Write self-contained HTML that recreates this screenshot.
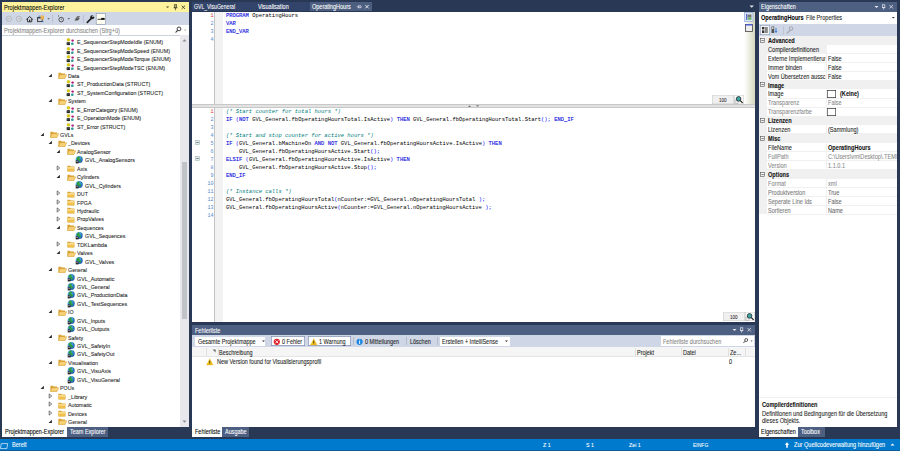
<!DOCTYPE html>
<html><head><meta charset="utf-8"><style>
html,body{margin:0;padding:0;width:900px;height:451px;overflow:hidden;background:#293955;}
body div{position:absolute;}
body div{-webkit-text-stroke:0.08px currentColor;}
body{font-family:'Liberation Sans', sans-serif;position:relative;}
</style></head><body>
<div style="left:2px;top:2px;width:187px;height:10px;background:#FFF29D;"></div>
<div style="left:4px;top:2.70px;line-height:10px;font-size:6.440px;color:#000;font-weight:400;font-family:'Liberation Sans', sans-serif;white-space:nowrap;transform:scaleX(0.8696);transform-origin:0 50%;">Projektmappen-Explorer</div>
<svg style="position:absolute;left:163px;top:4px" width="30" height="7" viewBox="0 0 30 7"><path d="M3 2.5h3.2l-1.6 1.6z" fill="#4a4a30"/><rect x="11.3" y="0.7" width="2.4" height="3" fill="#b8ae6a" stroke="#4a4a30" stroke-width="0.7"/><path d="M10.6 3.8h3.8M12.5 3.8v2.4" stroke="#4a4a30" stroke-width="0.8"/><path d="M18.7 1.6l3.3 3.3M22 1.6l-3.3 3.3" stroke="#4a4a30" stroke-width="0.95"/></svg>
<div style="left:2px;top:12px;width:187px;height:13.3px;background:#CFD6E5;"></div>
<svg style="position:absolute;left:0px;top:12px" width="110" height="13" viewBox="0 0 110 13">
<circle cx="8.8" cy="6.8" r="2.7" fill="#d8dce4" stroke="#aeb2ba" stroke-width="0.9"/><path d="M10 6.8h-2.4M8.7 5.6l-1.2 1.2l1.2 1.2" stroke="#aeb2ba" stroke-width="0.7" fill="none"/>
<circle cx="18.9" cy="6.8" r="2.7" fill="#d8dce4" stroke="#aeb2ba" stroke-width="0.9"/><path d="M17.7 6.8h2.4M19 5.6l1.2 1.2l-1.2 1.2" stroke="#aeb2ba" stroke-width="0.7" fill="none"/>
<path d="M26.3 7.6l3.3-3.1l3.3 3.1" fill="none" stroke="#2a2a2a" stroke-width="1"/><path d="M27.5 7v2.8h4.2v-2.8" fill="none" stroke="#2a2a2a" stroke-width="0.9"/><rect x="29" y="7.6" width="1.3" height="2.2" fill="#2a2a2a"/>
<rect x="37.6" y="5.6" width="4.6" height="4" fill="none" stroke="#333" stroke-width="0.9"/><rect x="37.6" y="5.4" width="4.6" height="1" fill="#333"/><rect x="40.6" y="3.5" width="3.4" height="4" fill="#e8b456"/><path d="M38.3 4.2h2" stroke="#3b78d0" stroke-width="0.8"/><path d="M42 9.6h1.6" stroke="#3b78d0" stroke-width="0.8"/>
<path d="M47.4 6.3h2.4l-1.2 1.2z" fill="#444"/>
<rect x="52.3" y="3" width="0.6" height="7.8" fill="#a9b2c4"/>
<circle cx="61.2" cy="7.6" r="2.3" fill="none" stroke="#444" stroke-width="0.9"/><path d="M61.2 6.5v1.2h0.9" stroke="#444" stroke-width="0.5" fill="none"/><rect x="58" y="3.5" width="1" height="1" fill="#555"/>
<path d="M67.6 6.3h2.4l-1.2 1.2z" fill="#444"/>
<path d="M74.3 8.5l2-2.6h3.6l-2 2.6z" fill="#555"/><path d="M75.3 6.5l2-2.4h3l-2 2.4" fill="#777"/>
<rect x="83.3" y="3" width="0.6" height="7.8" fill="#a9b2c4"/>
<path d="M87.3 10.4l4-4" stroke="#1e1e1e" stroke-width="1.6" stroke-linecap="round"/><circle cx="92.2" cy="5.2" r="2" fill="#1e1e1e"/><path d="M92.4 4.9l2-2" stroke="#cfd6e5" stroke-width="1.2"/>
<rect x="96.2" y="1.5" width="9.4" height="10.8" fill="#fffcf0" stroke="#7f8fb0" stroke-width="0.6"/>
<path d="M97.6 7.3h7" stroke="#111" stroke-width="0.8"/><rect x="101.2" y="5.9" width="3.4" height="1.8" fill="#111"/>
</svg>
<div style="left:2px;top:25.3px;width:187px;height:9.7px;background:#FFFFFF;"></div>
<div style="left:4px;top:25.70px;line-height:10px;font-size:6.440px;color:#858585;font-weight:400;font-family:'Liberation Sans', sans-serif;white-space:nowrap;transform:scaleX(0.8696);transform-origin:0 50%;">Projektmappen-Explorer durchsuchen (Strg+ü)</div>
<svg style="position:absolute;left:174px;top:26px" width="14" height="8" viewBox="0 0 14 8"><circle cx="5" cy="2.9" r="1.9" fill="none" stroke="#2a2a2a" stroke-width="0.9"/><path d="M3.6 4.3l-2 2.2" stroke="#2a2a2a" stroke-width="1.1"/><path d="M10.2 3.8h2l-1 1z" fill="#666"/></svg>
<div style="left:2px;top:35px;width:178px;height:392px;background:#FFFFFF;"></div>
<div style="left:2px;top:35px;width:187px;height:0.8px;background:#CAD2E0;"></div>
<div style="left:180px;top:35px;width:9px;height:392px;background:#E8E8EC;"></div>
<div style="left:182px;top:162px;width:5px;height:157px;background:#C2C3C9;"></div>
<svg style="position:absolute;left:180px;top:36px" width="9" height="8" viewBox="0 0 9 8"><path d="M2.5 5.5l2-2.2l2 2.2z" fill="#868999"/></svg>
<svg style="position:absolute;left:180px;top:418px" width="9" height="8" viewBox="0 0 9 8"><path d="M2.5 2.5l2 2.2l2-2.2z" fill="#868999"/></svg>
<div style="left:2px;top:35px;width:178px;height:392px;overflow:hidden">
<svg style="position:absolute;left:64.0px;top:3.1px" width="9" height="9" viewBox="0 0 9 9"><circle cx="2.45" cy="1.8" r="1.5" fill="#e0d000" stroke="#a09400" stroke-width="0.3"/><path d="M0.7 4.2h3.3v2.9h-3.3z" fill="#1e1e1e"/><path d="M1.2 6.8v-2l1.15 1.2l1.15-1.2v2" stroke="#707070" stroke-width="0.4" fill="none"/><ellipse cx="6.6" cy="2.6" rx="1.35" ry="1.1" fill="#b8157c"/><path d="M6.8 3.6v1" stroke="#6a8a8a" stroke-width="0.4"/><ellipse cx="6.3" cy="5.8" rx="1.4" ry="1.3" fill="#2f9a9a"/></svg>
<div style="left:74.5px;top:2.20px;line-height:10px;font-size:6.152px;color:#1e1e1e;font-weight:400;font-family:'Liberation Sans', sans-serif;white-space:nowrap;transform:scaleX(0.8696);transform-origin:0 50%;">E_SequencerStepModeIdle (ENUM)</div>
<svg style="position:absolute;left:64.0px;top:11.539999999999997px" width="9" height="9" viewBox="0 0 9 9"><circle cx="2.45" cy="1.8" r="1.5" fill="#e0d000" stroke="#a09400" stroke-width="0.3"/><path d="M0.7 4.2h3.3v2.9h-3.3z" fill="#1e1e1e"/><path d="M1.2 6.8v-2l1.15 1.2l1.15-1.2v2" stroke="#707070" stroke-width="0.4" fill="none"/><ellipse cx="6.6" cy="2.6" rx="1.35" ry="1.1" fill="#b8157c"/><path d="M6.8 3.6v1" stroke="#6a8a8a" stroke-width="0.4"/><ellipse cx="6.3" cy="5.8" rx="1.4" ry="1.3" fill="#2f9a9a"/></svg>
<div style="left:74.5px;top:10.64px;line-height:10px;font-size:6.152px;color:#1e1e1e;font-weight:400;font-family:'Liberation Sans', sans-serif;white-space:nowrap;transform:scaleX(0.8696);transform-origin:0 50%;">E_SequencerStepModeSpeed (ENUM)</div>
<svg style="position:absolute;left:64.0px;top:19.979999999999997px" width="9" height="9" viewBox="0 0 9 9"><circle cx="2.45" cy="1.8" r="1.5" fill="#e0d000" stroke="#a09400" stroke-width="0.3"/><path d="M0.7 4.2h3.3v2.9h-3.3z" fill="#1e1e1e"/><path d="M1.2 6.8v-2l1.15 1.2l1.15-1.2v2" stroke="#707070" stroke-width="0.4" fill="none"/><ellipse cx="6.6" cy="2.6" rx="1.35" ry="1.1" fill="#b8157c"/><path d="M6.8 3.6v1" stroke="#6a8a8a" stroke-width="0.4"/><ellipse cx="6.3" cy="5.8" rx="1.4" ry="1.3" fill="#2f9a9a"/></svg>
<div style="left:74.5px;top:19.08px;line-height:10px;font-size:6.152px;color:#1e1e1e;font-weight:400;font-family:'Liberation Sans', sans-serif;white-space:nowrap;transform:scaleX(0.8696);transform-origin:0 50%;">E_SequencerStepModeTorque (ENUM)</div>
<svg style="position:absolute;left:64.0px;top:28.419999999999995px" width="9" height="9" viewBox="0 0 9 9"><circle cx="2.45" cy="1.8" r="1.5" fill="#e0d000" stroke="#a09400" stroke-width="0.3"/><path d="M0.7 4.2h3.3v2.9h-3.3z" fill="#1e1e1e"/><path d="M1.2 6.8v-2l1.15 1.2l1.15-1.2v2" stroke="#707070" stroke-width="0.4" fill="none"/><ellipse cx="6.6" cy="2.6" rx="1.35" ry="1.1" fill="#b8157c"/><path d="M6.8 3.6v1" stroke="#6a8a8a" stroke-width="0.4"/><ellipse cx="6.3" cy="5.8" rx="1.4" ry="1.3" fill="#2f9a9a"/></svg>
<div style="left:74.5px;top:27.52px;line-height:10px;font-size:6.152px;color:#1e1e1e;font-weight:400;font-family:'Liberation Sans', sans-serif;white-space:nowrap;transform:scaleX(0.8696);transform-origin:0 50%;">E_SequencerStepModeTSC (ENUM)</div>
<svg style="position:absolute;left:46.0px;top:37.75999999999999px" width="5" height="5" viewBox="0 0 5 5"><path d="M0.6 4.1h3.3v-3.3z" fill="#262626"/></svg>
<svg style="position:absolute;left:56.2px;top:37.35999999999999px" width="9" height="7" viewBox="0 0 9 7"><path d="M0.4 0.7h2.6l0.7 0.8h3.3v4.9h-6.6z" fill="#d9a234"/><path d="M0.4 6.4l1.5-3.7h6.8l-1.6 3.7z" fill="#f6d27a" stroke="#d39a2c" stroke-width="0.45"/></svg>
<div style="left:66.2px;top:35.96px;line-height:10px;font-size:6.152px;color:#1e1e1e;font-weight:400;font-family:'Liberation Sans', sans-serif;white-space:nowrap;transform:scaleX(0.8696);transform-origin:0 50%;">Data</div>
<svg style="position:absolute;left:64.0px;top:45.29999999999999px" width="9" height="9" viewBox="0 0 9 9"><circle cx="2.45" cy="1.8" r="1.5" fill="#e0d000" stroke="#a09400" stroke-width="0.3"/><path d="M0.7 4.2h3.3v2.9h-3.3z" fill="#1e1e1e"/><path d="M1.2 6.8v-2l1.15 1.2l1.15-1.2v2" stroke="#707070" stroke-width="0.4" fill="none"/><ellipse cx="6.6" cy="2.6" rx="1.35" ry="1.1" fill="#b8157c"/><path d="M6.8 3.6v1" stroke="#6a8a8a" stroke-width="0.4"/><ellipse cx="6.3" cy="5.8" rx="1.4" ry="1.3" fill="#2f9a9a"/></svg>
<div style="left:74.5px;top:44.40px;line-height:10px;font-size:6.152px;color:#1e1e1e;font-weight:400;font-family:'Liberation Sans', sans-serif;white-space:nowrap;transform:scaleX(0.8696);transform-origin:0 50%;">ST_ProductionData (STRUCT)</div>
<svg style="position:absolute;left:64.0px;top:53.74px" width="9" height="9" viewBox="0 0 9 9"><circle cx="2.45" cy="1.8" r="1.5" fill="#e0d000" stroke="#a09400" stroke-width="0.3"/><path d="M0.7 4.2h3.3v2.9h-3.3z" fill="#1e1e1e"/><path d="M1.2 6.8v-2l1.15 1.2l1.15-1.2v2" stroke="#707070" stroke-width="0.4" fill="none"/><ellipse cx="6.6" cy="2.6" rx="1.35" ry="1.1" fill="#b8157c"/><path d="M6.8 3.6v1" stroke="#6a8a8a" stroke-width="0.4"/><ellipse cx="6.3" cy="5.8" rx="1.4" ry="1.3" fill="#2f9a9a"/></svg>
<div style="left:74.5px;top:52.84px;line-height:10px;font-size:6.152px;color:#1e1e1e;font-weight:400;font-family:'Liberation Sans', sans-serif;white-space:nowrap;transform:scaleX(0.8696);transform-origin:0 50%;">ST_SystemConfiguration (STRUCT)</div>
<svg style="position:absolute;left:46.0px;top:63.08px" width="5" height="5" viewBox="0 0 5 5"><path d="M0.6 4.1h3.3v-3.3z" fill="#262626"/></svg>
<svg style="position:absolute;left:56.2px;top:62.68px" width="9" height="7" viewBox="0 0 9 7"><path d="M0.4 0.7h2.6l0.7 0.8h3.3v4.9h-6.6z" fill="#d9a234"/><path d="M0.4 6.4l1.5-3.7h6.8l-1.6 3.7z" fill="#f6d27a" stroke="#d39a2c" stroke-width="0.45"/></svg>
<div style="left:66.2px;top:61.28px;line-height:10px;font-size:6.152px;color:#1e1e1e;font-weight:400;font-family:'Liberation Sans', sans-serif;white-space:nowrap;transform:scaleX(0.8696);transform-origin:0 50%;">System</div>
<svg style="position:absolute;left:64.0px;top:70.61999999999999px" width="9" height="9" viewBox="0 0 9 9"><circle cx="2.45" cy="1.8" r="1.5" fill="#e0d000" stroke="#a09400" stroke-width="0.3"/><path d="M0.7 4.2h3.3v2.9h-3.3z" fill="#1e1e1e"/><path d="M1.2 6.8v-2l1.15 1.2l1.15-1.2v2" stroke="#707070" stroke-width="0.4" fill="none"/><ellipse cx="6.6" cy="2.6" rx="1.35" ry="1.1" fill="#b8157c"/><path d="M6.8 3.6v1" stroke="#6a8a8a" stroke-width="0.4"/><ellipse cx="6.3" cy="5.8" rx="1.4" ry="1.3" fill="#2f9a9a"/></svg>
<div style="left:74.5px;top:69.72px;line-height:10px;font-size:6.152px;color:#1e1e1e;font-weight:400;font-family:'Liberation Sans', sans-serif;white-space:nowrap;transform:scaleX(0.8696);transform-origin:0 50%;">E_ErrorCategory (ENUM)</div>
<svg style="position:absolute;left:64.0px;top:79.05999999999999px" width="9" height="9" viewBox="0 0 9 9"><circle cx="2.45" cy="1.8" r="1.5" fill="#e0d000" stroke="#a09400" stroke-width="0.3"/><path d="M0.7 4.2h3.3v2.9h-3.3z" fill="#1e1e1e"/><path d="M1.2 6.8v-2l1.15 1.2l1.15-1.2v2" stroke="#707070" stroke-width="0.4" fill="none"/><ellipse cx="6.6" cy="2.6" rx="1.35" ry="1.1" fill="#b8157c"/><path d="M6.8 3.6v1" stroke="#6a8a8a" stroke-width="0.4"/><ellipse cx="6.3" cy="5.8" rx="1.4" ry="1.3" fill="#2f9a9a"/></svg>
<div style="left:74.5px;top:78.16px;line-height:10px;font-size:6.152px;color:#1e1e1e;font-weight:400;font-family:'Liberation Sans', sans-serif;white-space:nowrap;transform:scaleX(0.8696);transform-origin:0 50%;">E_OperationMode (ENUM)</div>
<svg style="position:absolute;left:64.0px;top:87.49999999999999px" width="9" height="9" viewBox="0 0 9 9"><circle cx="2.45" cy="1.8" r="1.5" fill="#e0d000" stroke="#a09400" stroke-width="0.3"/><path d="M0.7 4.2h3.3v2.9h-3.3z" fill="#1e1e1e"/><path d="M1.2 6.8v-2l1.15 1.2l1.15-1.2v2" stroke="#707070" stroke-width="0.4" fill="none"/><ellipse cx="6.6" cy="2.6" rx="1.35" ry="1.1" fill="#b8157c"/><path d="M6.8 3.6v1" stroke="#6a8a8a" stroke-width="0.4"/><ellipse cx="6.3" cy="5.8" rx="1.4" ry="1.3" fill="#2f9a9a"/></svg>
<div style="left:74.5px;top:86.60px;line-height:10px;font-size:6.152px;color:#1e1e1e;font-weight:400;font-family:'Liberation Sans', sans-serif;white-space:nowrap;transform:scaleX(0.8696);transform-origin:0 50%;">ST_Error (STRUCT)</div>
<svg style="position:absolute;left:37.7px;top:96.83999999999997px" width="5" height="5" viewBox="0 0 5 5"><path d="M0.6 4.1h3.3v-3.3z" fill="#262626"/></svg>
<svg style="position:absolute;left:47.9px;top:96.43999999999997px" width="9" height="7" viewBox="0 0 9 7"><path d="M0.4 0.7h2.6l0.7 0.8h3.3v4.9h-6.6z" fill="#d9a234"/><path d="M0.4 6.4l1.5-3.7h6.8l-1.6 3.7z" fill="#f6d27a" stroke="#d39a2c" stroke-width="0.45"/></svg>
<div style="left:57.9px;top:95.04px;line-height:10px;font-size:6.152px;color:#1e1e1e;font-weight:400;font-family:'Liberation Sans', sans-serif;white-space:nowrap;transform:scaleX(0.8696);transform-origin:0 50%;">GVLs</div>
<svg style="position:absolute;left:46.0px;top:105.28px" width="5" height="5" viewBox="0 0 5 5"><path d="M0.6 4.1h3.3v-3.3z" fill="#262626"/></svg>
<svg style="position:absolute;left:56.2px;top:104.88px" width="9" height="7" viewBox="0 0 9 7"><path d="M0.4 0.7h2.6l0.7 0.8h3.3v4.9h-6.6z" fill="#d9a234"/><path d="M0.4 6.4l1.5-3.7h6.8l-1.6 3.7z" fill="#f6d27a" stroke="#d39a2c" stroke-width="0.45"/></svg>
<div style="left:66.2px;top:103.48px;line-height:10px;font-size:6.152px;color:#1e1e1e;font-weight:400;font-family:'Liberation Sans', sans-serif;white-space:nowrap;transform:scaleX(0.8696);transform-origin:0 50%;">_Devices</div>
<svg style="position:absolute;left:54.3px;top:113.72px" width="5" height="5" viewBox="0 0 5 5"><path d="M0.6 4.1h3.3v-3.3z" fill="#262626"/></svg>
<svg style="position:absolute;left:64.5px;top:113.32px" width="9" height="7" viewBox="0 0 9 7"><path d="M0.4 0.7h2.6l0.7 0.8h3.3v4.9h-6.6z" fill="#d9a234"/><path d="M0.4 6.4l1.5-3.7h6.8l-1.6 3.7z" fill="#f6d27a" stroke="#d39a2c" stroke-width="0.45"/></svg>
<div style="left:74.5px;top:111.92px;line-height:10px;font-size:6.152px;color:#1e1e1e;font-weight:400;font-family:'Liberation Sans', sans-serif;white-space:nowrap;transform:scaleX(0.8696);transform-origin:0 50%;">AnalogSensor</div>
<svg style="position:absolute;left:71.8px;top:120.16px" width="9" height="9" viewBox="0 0 9 9"><defs><radialGradient id="g" cx="0.35" cy="0.3" r="0.8"><stop offset="0" stop-color="#8fd4ff"/><stop offset="0.5" stop-color="#2f86d8"/><stop offset="1" stop-color="#1a4fa0"/></radialGradient></defs><circle cx="5.2" cy="4.6" r="3.5" fill="url(#g)"/><g transform="translate(0 0.3)"><path d="M3 2.2c0.8-0.9 2-1.2 2.6-0.5c0.5 0.6-0.4 1.2 0.1 1.9c0.5 0.7 1.4 0.3 1.3 1.3c-0.1 0.9-1.2 1.6-1.9 1.2c-0.6-0.4-0.2-1.3-0.9-1.6c-0.6-0.3-1.4 0.1-1.6-0.7c-0.1-0.5 0.1-1.1 0.4-1.6z" fill="#2f9d3e"/><path d="M7.2 1.5c0.6 0.4 1.1 1 1.3 1.7c-0.6 0.1-1.2-0.5-1.3-1.7z" fill="#2f9d3e"/></g><rect x="1.7" y="5.4" width="2.9" height="3" fill="#2a2a2a"/><rect x="2.3" y="6" width="1.6" height="0.7" fill="#bbb"/></svg>
<div style="left:82.8px;top:120.36px;line-height:10px;font-size:6.152px;color:#1e1e1e;font-weight:400;font-family:'Liberation Sans', sans-serif;white-space:nowrap;transform:scaleX(0.8696);transform-origin:0 50%;">GVL_AnalogSensors</div>
<svg style="position:absolute;left:54.3px;top:130.1px" width="5" height="6" viewBox="0 0 5 6"><path d="M1.2 0.9l2.5 2.1l-2.5 2.1z" fill="#fff" stroke="#4a4a4a" stroke-width="0.75" stroke-linejoin="round"/></svg>
<svg style="position:absolute;left:64.5px;top:130.2px" width="9" height="7" viewBox="0 0 9 7"><path d="M0.4 0.7h2.7l0.7 0.8h3.6v4.9h-7z" fill="#d9a234"/><rect x="0.6" y="2.2" width="6.6" height="4" fill="#f0c04a"/><rect x="0.6" y="2.2" width="6.6" height="1.4" fill="#fae19a"/></svg>
<div style="left:74.5px;top:128.80px;line-height:10px;font-size:6.152px;color:#1e1e1e;font-weight:400;font-family:'Liberation Sans', sans-serif;white-space:nowrap;transform:scaleX(0.8696);transform-origin:0 50%;">Axis</div>
<svg style="position:absolute;left:54.3px;top:139.04px" width="5" height="5" viewBox="0 0 5 5"><path d="M0.6 4.1h3.3v-3.3z" fill="#262626"/></svg>
<svg style="position:absolute;left:64.5px;top:138.64px" width="9" height="7" viewBox="0 0 9 7"><path d="M0.4 0.7h2.6l0.7 0.8h3.3v4.9h-6.6z" fill="#d9a234"/><path d="M0.4 6.4l1.5-3.7h6.8l-1.6 3.7z" fill="#f6d27a" stroke="#d39a2c" stroke-width="0.45"/></svg>
<div style="left:74.5px;top:137.24px;line-height:10px;font-size:6.152px;color:#1e1e1e;font-weight:400;font-family:'Liberation Sans', sans-serif;white-space:nowrap;transform:scaleX(0.8696);transform-origin:0 50%;">Cylinders</div>
<svg style="position:absolute;left:71.8px;top:145.48px" width="9" height="9" viewBox="0 0 9 9"><defs><radialGradient id="g" cx="0.35" cy="0.3" r="0.8"><stop offset="0" stop-color="#8fd4ff"/><stop offset="0.5" stop-color="#2f86d8"/><stop offset="1" stop-color="#1a4fa0"/></radialGradient></defs><circle cx="5.2" cy="4.6" r="3.5" fill="url(#g)"/><g transform="translate(0 0.3)"><path d="M3 2.2c0.8-0.9 2-1.2 2.6-0.5c0.5 0.6-0.4 1.2 0.1 1.9c0.5 0.7 1.4 0.3 1.3 1.3c-0.1 0.9-1.2 1.6-1.9 1.2c-0.6-0.4-0.2-1.3-0.9-1.6c-0.6-0.3-1.4 0.1-1.6-0.7c-0.1-0.5 0.1-1.1 0.4-1.6z" fill="#2f9d3e"/><path d="M7.2 1.5c0.6 0.4 1.1 1 1.3 1.7c-0.6 0.1-1.2-0.5-1.3-1.7z" fill="#2f9d3e"/></g><rect x="1.7" y="5.4" width="2.9" height="3" fill="#2a2a2a"/><rect x="2.3" y="6" width="1.6" height="0.7" fill="#bbb"/></svg>
<div style="left:82.8px;top:145.68px;line-height:10px;font-size:6.152px;color:#1e1e1e;font-weight:400;font-family:'Liberation Sans', sans-serif;white-space:nowrap;transform:scaleX(0.8696);transform-origin:0 50%;">GVL_Cylinders</div>
<svg style="position:absolute;left:54.3px;top:155.42px" width="5" height="6" viewBox="0 0 5 6"><path d="M1.2 0.9l2.5 2.1l-2.5 2.1z" fill="#fff" stroke="#4a4a4a" stroke-width="0.75" stroke-linejoin="round"/></svg>
<svg style="position:absolute;left:64.5px;top:155.51999999999998px" width="9" height="7" viewBox="0 0 9 7"><path d="M0.4 0.7h2.7l0.7 0.8h3.6v4.9h-7z" fill="#d9a234"/><rect x="0.6" y="2.2" width="6.6" height="4" fill="#f0c04a"/><rect x="0.6" y="2.2" width="6.6" height="1.4" fill="#fae19a"/></svg>
<div style="left:74.5px;top:154.12px;line-height:10px;font-size:6.152px;color:#1e1e1e;font-weight:400;font-family:'Liberation Sans', sans-serif;white-space:nowrap;transform:scaleX(0.8696);transform-origin:0 50%;">DUT</div>
<svg style="position:absolute;left:54.3px;top:163.85999999999999px" width="5" height="6" viewBox="0 0 5 6"><path d="M1.2 0.9l2.5 2.1l-2.5 2.1z" fill="#fff" stroke="#4a4a4a" stroke-width="0.75" stroke-linejoin="round"/></svg>
<svg style="position:absolute;left:64.5px;top:163.95999999999998px" width="9" height="7" viewBox="0 0 9 7"><path d="M0.4 0.7h2.7l0.7 0.8h3.6v4.9h-7z" fill="#d9a234"/><rect x="0.6" y="2.2" width="6.6" height="4" fill="#f0c04a"/><rect x="0.6" y="2.2" width="6.6" height="1.4" fill="#fae19a"/></svg>
<div style="left:74.5px;top:162.56px;line-height:10px;font-size:6.152px;color:#1e1e1e;font-weight:400;font-family:'Liberation Sans', sans-serif;white-space:nowrap;transform:scaleX(0.8696);transform-origin:0 50%;">FPGA</div>
<svg style="position:absolute;left:54.3px;top:172.29999999999998px" width="5" height="6" viewBox="0 0 5 6"><path d="M1.2 0.9l2.5 2.1l-2.5 2.1z" fill="#fff" stroke="#4a4a4a" stroke-width="0.75" stroke-linejoin="round"/></svg>
<svg style="position:absolute;left:64.5px;top:172.39999999999998px" width="9" height="7" viewBox="0 0 9 7"><path d="M0.4 0.7h2.7l0.7 0.8h3.6v4.9h-7z" fill="#d9a234"/><rect x="0.6" y="2.2" width="6.6" height="4" fill="#f0c04a"/><rect x="0.6" y="2.2" width="6.6" height="1.4" fill="#fae19a"/></svg>
<div style="left:74.5px;top:171.00px;line-height:10px;font-size:6.152px;color:#1e1e1e;font-weight:400;font-family:'Liberation Sans', sans-serif;white-space:nowrap;transform:scaleX(0.8696);transform-origin:0 50%;">Hydraulic</div>
<svg style="position:absolute;left:54.3px;top:180.73999999999998px" width="5" height="6" viewBox="0 0 5 6"><path d="M1.2 0.9l2.5 2.1l-2.5 2.1z" fill="#fff" stroke="#4a4a4a" stroke-width="0.75" stroke-linejoin="round"/></svg>
<svg style="position:absolute;left:64.5px;top:180.83999999999997px" width="9" height="7" viewBox="0 0 9 7"><path d="M0.4 0.7h2.7l0.7 0.8h3.6v4.9h-7z" fill="#d9a234"/><rect x="0.6" y="2.2" width="6.6" height="4" fill="#f0c04a"/><rect x="0.6" y="2.2" width="6.6" height="1.4" fill="#fae19a"/></svg>
<div style="left:74.5px;top:179.44px;line-height:10px;font-size:6.152px;color:#1e1e1e;font-weight:400;font-family:'Liberation Sans', sans-serif;white-space:nowrap;transform:scaleX(0.8696);transform-origin:0 50%;">PropValves</div>
<svg style="position:absolute;left:54.3px;top:189.67999999999998px" width="5" height="5" viewBox="0 0 5 5"><path d="M0.6 4.1h3.3v-3.3z" fill="#262626"/></svg>
<svg style="position:absolute;left:64.5px;top:189.27999999999997px" width="9" height="7" viewBox="0 0 9 7"><path d="M0.4 0.7h2.6l0.7 0.8h3.3v4.9h-6.6z" fill="#d9a234"/><path d="M0.4 6.4l1.5-3.7h6.8l-1.6 3.7z" fill="#f6d27a" stroke="#d39a2c" stroke-width="0.45"/></svg>
<div style="left:74.5px;top:187.88px;line-height:10px;font-size:6.152px;color:#1e1e1e;font-weight:400;font-family:'Liberation Sans', sans-serif;white-space:nowrap;transform:scaleX(0.8696);transform-origin:0 50%;">Sequences</div>
<svg style="position:absolute;left:71.8px;top:196.11999999999998px" width="9" height="9" viewBox="0 0 9 9"><defs><radialGradient id="g" cx="0.35" cy="0.3" r="0.8"><stop offset="0" stop-color="#8fd4ff"/><stop offset="0.5" stop-color="#2f86d8"/><stop offset="1" stop-color="#1a4fa0"/></radialGradient></defs><circle cx="5.2" cy="4.6" r="3.5" fill="url(#g)"/><g transform="translate(0 0.3)"><path d="M3 2.2c0.8-0.9 2-1.2 2.6-0.5c0.5 0.6-0.4 1.2 0.1 1.9c0.5 0.7 1.4 0.3 1.3 1.3c-0.1 0.9-1.2 1.6-1.9 1.2c-0.6-0.4-0.2-1.3-0.9-1.6c-0.6-0.3-1.4 0.1-1.6-0.7c-0.1-0.5 0.1-1.1 0.4-1.6z" fill="#2f9d3e"/><path d="M7.2 1.5c0.6 0.4 1.1 1 1.3 1.7c-0.6 0.1-1.2-0.5-1.3-1.7z" fill="#2f9d3e"/></g><rect x="1.7" y="5.4" width="2.9" height="3" fill="#2a2a2a"/><rect x="2.3" y="6" width="1.6" height="0.7" fill="#bbb"/></svg>
<div style="left:82.8px;top:196.32px;line-height:10px;font-size:6.152px;color:#1e1e1e;font-weight:400;font-family:'Liberation Sans', sans-serif;white-space:nowrap;transform:scaleX(0.8696);transform-origin:0 50%;">GVL_Sequences</div>
<svg style="position:absolute;left:54.3px;top:206.06px" width="5" height="6" viewBox="0 0 5 6"><path d="M1.2 0.9l2.5 2.1l-2.5 2.1z" fill="#fff" stroke="#4a4a4a" stroke-width="0.75" stroke-linejoin="round"/></svg>
<svg style="position:absolute;left:64.5px;top:206.16px" width="9" height="7" viewBox="0 0 9 7"><path d="M0.4 0.7h2.7l0.7 0.8h3.6v4.9h-7z" fill="#d9a234"/><rect x="0.6" y="2.2" width="6.6" height="4" fill="#f0c04a"/><rect x="0.6" y="2.2" width="6.6" height="1.4" fill="#fae19a"/></svg>
<div style="left:74.5px;top:204.76px;line-height:10px;font-size:6.152px;color:#1e1e1e;font-weight:400;font-family:'Liberation Sans', sans-serif;white-space:nowrap;transform:scaleX(0.8696);transform-origin:0 50%;">TDKLambda</div>
<svg style="position:absolute;left:54.3px;top:215.0px" width="5" height="5" viewBox="0 0 5 5"><path d="M0.6 4.1h3.3v-3.3z" fill="#262626"/></svg>
<svg style="position:absolute;left:64.5px;top:214.6px" width="9" height="7" viewBox="0 0 9 7"><path d="M0.4 0.7h2.6l0.7 0.8h3.3v4.9h-6.6z" fill="#d9a234"/><path d="M0.4 6.4l1.5-3.7h6.8l-1.6 3.7z" fill="#f6d27a" stroke="#d39a2c" stroke-width="0.45"/></svg>
<div style="left:74.5px;top:213.20px;line-height:10px;font-size:6.152px;color:#1e1e1e;font-weight:400;font-family:'Liberation Sans', sans-serif;white-space:nowrap;transform:scaleX(0.8696);transform-origin:0 50%;">Valves</div>
<svg style="position:absolute;left:71.8px;top:221.44px" width="9" height="9" viewBox="0 0 9 9"><defs><radialGradient id="g" cx="0.35" cy="0.3" r="0.8"><stop offset="0" stop-color="#8fd4ff"/><stop offset="0.5" stop-color="#2f86d8"/><stop offset="1" stop-color="#1a4fa0"/></radialGradient></defs><circle cx="5.2" cy="4.6" r="3.5" fill="url(#g)"/><g transform="translate(0 0.3)"><path d="M3 2.2c0.8-0.9 2-1.2 2.6-0.5c0.5 0.6-0.4 1.2 0.1 1.9c0.5 0.7 1.4 0.3 1.3 1.3c-0.1 0.9-1.2 1.6-1.9 1.2c-0.6-0.4-0.2-1.3-0.9-1.6c-0.6-0.3-1.4 0.1-1.6-0.7c-0.1-0.5 0.1-1.1 0.4-1.6z" fill="#2f9d3e"/><path d="M7.2 1.5c0.6 0.4 1.1 1 1.3 1.7c-0.6 0.1-1.2-0.5-1.3-1.7z" fill="#2f9d3e"/></g><rect x="1.7" y="5.4" width="2.9" height="3" fill="#2a2a2a"/><rect x="2.3" y="6" width="1.6" height="0.7" fill="#bbb"/></svg>
<div style="left:82.8px;top:221.64px;line-height:10px;font-size:6.152px;color:#1e1e1e;font-weight:400;font-family:'Liberation Sans', sans-serif;white-space:nowrap;transform:scaleX(0.8696);transform-origin:0 50%;">GVL_Valves</div>
<svg style="position:absolute;left:46.0px;top:231.88px" width="5" height="5" viewBox="0 0 5 5"><path d="M0.6 4.1h3.3v-3.3z" fill="#262626"/></svg>
<svg style="position:absolute;left:56.2px;top:231.48px" width="9" height="7" viewBox="0 0 9 7"><path d="M0.4 0.7h2.6l0.7 0.8h3.3v4.9h-6.6z" fill="#d9a234"/><path d="M0.4 6.4l1.5-3.7h6.8l-1.6 3.7z" fill="#f6d27a" stroke="#d39a2c" stroke-width="0.45"/></svg>
<div style="left:66.2px;top:230.08px;line-height:10px;font-size:6.152px;color:#1e1e1e;font-weight:400;font-family:'Liberation Sans', sans-serif;white-space:nowrap;transform:scaleX(0.8696);transform-origin:0 50%;">General</div>
<svg style="position:absolute;left:63.5px;top:238.32px" width="9" height="9" viewBox="0 0 9 9"><defs><radialGradient id="g" cx="0.35" cy="0.3" r="0.8"><stop offset="0" stop-color="#8fd4ff"/><stop offset="0.5" stop-color="#2f86d8"/><stop offset="1" stop-color="#1a4fa0"/></radialGradient></defs><circle cx="5.2" cy="4.6" r="3.5" fill="url(#g)"/><g transform="translate(0 0.3)"><path d="M3 2.2c0.8-0.9 2-1.2 2.6-0.5c0.5 0.6-0.4 1.2 0.1 1.9c0.5 0.7 1.4 0.3 1.3 1.3c-0.1 0.9-1.2 1.6-1.9 1.2c-0.6-0.4-0.2-1.3-0.9-1.6c-0.6-0.3-1.4 0.1-1.6-0.7c-0.1-0.5 0.1-1.1 0.4-1.6z" fill="#2f9d3e"/><path d="M7.2 1.5c0.6 0.4 1.1 1 1.3 1.7c-0.6 0.1-1.2-0.5-1.3-1.7z" fill="#2f9d3e"/></g><rect x="1.7" y="5.4" width="2.9" height="3" fill="#2a2a2a"/><rect x="2.3" y="6" width="1.6" height="0.7" fill="#bbb"/></svg>
<div style="left:74.5px;top:238.52px;line-height:10px;font-size:6.152px;color:#1e1e1e;font-weight:400;font-family:'Liberation Sans', sans-serif;white-space:nowrap;transform:scaleX(0.8696);transform-origin:0 50%;">GVL_Automatic</div>
<svg style="position:absolute;left:63.5px;top:246.76px" width="9" height="9" viewBox="0 0 9 9"><defs><radialGradient id="g" cx="0.35" cy="0.3" r="0.8"><stop offset="0" stop-color="#8fd4ff"/><stop offset="0.5" stop-color="#2f86d8"/><stop offset="1" stop-color="#1a4fa0"/></radialGradient></defs><circle cx="5.2" cy="4.6" r="3.5" fill="url(#g)"/><g transform="translate(0 0.3)"><path d="M3 2.2c0.8-0.9 2-1.2 2.6-0.5c0.5 0.6-0.4 1.2 0.1 1.9c0.5 0.7 1.4 0.3 1.3 1.3c-0.1 0.9-1.2 1.6-1.9 1.2c-0.6-0.4-0.2-1.3-0.9-1.6c-0.6-0.3-1.4 0.1-1.6-0.7c-0.1-0.5 0.1-1.1 0.4-1.6z" fill="#2f9d3e"/><path d="M7.2 1.5c0.6 0.4 1.1 1 1.3 1.7c-0.6 0.1-1.2-0.5-1.3-1.7z" fill="#2f9d3e"/></g><rect x="1.7" y="5.4" width="2.9" height="3" fill="#2a2a2a"/><rect x="2.3" y="6" width="1.6" height="0.7" fill="#bbb"/></svg>
<div style="left:74.5px;top:246.96px;line-height:10px;font-size:6.152px;color:#1e1e1e;font-weight:400;font-family:'Liberation Sans', sans-serif;white-space:nowrap;transform:scaleX(0.8696);transform-origin:0 50%;">GVL_General</div>
<svg style="position:absolute;left:63.5px;top:255.2px" width="9" height="9" viewBox="0 0 9 9"><defs><radialGradient id="g" cx="0.35" cy="0.3" r="0.8"><stop offset="0" stop-color="#8fd4ff"/><stop offset="0.5" stop-color="#2f86d8"/><stop offset="1" stop-color="#1a4fa0"/></radialGradient></defs><circle cx="5.2" cy="4.6" r="3.5" fill="url(#g)"/><g transform="translate(0 0.3)"><path d="M3 2.2c0.8-0.9 2-1.2 2.6-0.5c0.5 0.6-0.4 1.2 0.1 1.9c0.5 0.7 1.4 0.3 1.3 1.3c-0.1 0.9-1.2 1.6-1.9 1.2c-0.6-0.4-0.2-1.3-0.9-1.6c-0.6-0.3-1.4 0.1-1.6-0.7c-0.1-0.5 0.1-1.1 0.4-1.6z" fill="#2f9d3e"/><path d="M7.2 1.5c0.6 0.4 1.1 1 1.3 1.7c-0.6 0.1-1.2-0.5-1.3-1.7z" fill="#2f9d3e"/></g><rect x="1.7" y="5.4" width="2.9" height="3" fill="#2a2a2a"/><rect x="2.3" y="6" width="1.6" height="0.7" fill="#bbb"/></svg>
<div style="left:74.5px;top:255.40px;line-height:10px;font-size:6.152px;color:#1e1e1e;font-weight:400;font-family:'Liberation Sans', sans-serif;white-space:nowrap;transform:scaleX(0.8696);transform-origin:0 50%;">GVL_ProductionData</div>
<svg style="position:absolute;left:63.5px;top:263.64px" width="9" height="9" viewBox="0 0 9 9"><defs><radialGradient id="g" cx="0.35" cy="0.3" r="0.8"><stop offset="0" stop-color="#8fd4ff"/><stop offset="0.5" stop-color="#2f86d8"/><stop offset="1" stop-color="#1a4fa0"/></radialGradient></defs><circle cx="5.2" cy="4.6" r="3.5" fill="url(#g)"/><g transform="translate(0 0.3)"><path d="M3 2.2c0.8-0.9 2-1.2 2.6-0.5c0.5 0.6-0.4 1.2 0.1 1.9c0.5 0.7 1.4 0.3 1.3 1.3c-0.1 0.9-1.2 1.6-1.9 1.2c-0.6-0.4-0.2-1.3-0.9-1.6c-0.6-0.3-1.4 0.1-1.6-0.7c-0.1-0.5 0.1-1.1 0.4-1.6z" fill="#2f9d3e"/><path d="M7.2 1.5c0.6 0.4 1.1 1 1.3 1.7c-0.6 0.1-1.2-0.5-1.3-1.7z" fill="#2f9d3e"/></g><rect x="1.7" y="5.4" width="2.9" height="3" fill="#2a2a2a"/><rect x="2.3" y="6" width="1.6" height="0.7" fill="#bbb"/></svg>
<div style="left:74.5px;top:263.84px;line-height:10px;font-size:6.152px;color:#1e1e1e;font-weight:400;font-family:'Liberation Sans', sans-serif;white-space:nowrap;transform:scaleX(0.8696);transform-origin:0 50%;">GVL_TestSequences</div>
<svg style="position:absolute;left:46.0px;top:274.08px" width="5" height="5" viewBox="0 0 5 5"><path d="M0.6 4.1h3.3v-3.3z" fill="#262626"/></svg>
<svg style="position:absolute;left:56.2px;top:273.68px" width="9" height="7" viewBox="0 0 9 7"><path d="M0.4 0.7h2.6l0.7 0.8h3.3v4.9h-6.6z" fill="#d9a234"/><path d="M0.4 6.4l1.5-3.7h6.8l-1.6 3.7z" fill="#f6d27a" stroke="#d39a2c" stroke-width="0.45"/></svg>
<div style="left:66.2px;top:272.28px;line-height:10px;font-size:6.152px;color:#1e1e1e;font-weight:400;font-family:'Liberation Sans', sans-serif;white-space:nowrap;transform:scaleX(0.8696);transform-origin:0 50%;">IO</div>
<svg style="position:absolute;left:63.5px;top:280.52px" width="9" height="9" viewBox="0 0 9 9"><defs><radialGradient id="g" cx="0.35" cy="0.3" r="0.8"><stop offset="0" stop-color="#8fd4ff"/><stop offset="0.5" stop-color="#2f86d8"/><stop offset="1" stop-color="#1a4fa0"/></radialGradient></defs><circle cx="5.2" cy="4.6" r="3.5" fill="url(#g)"/><g transform="translate(0 0.3)"><path d="M3 2.2c0.8-0.9 2-1.2 2.6-0.5c0.5 0.6-0.4 1.2 0.1 1.9c0.5 0.7 1.4 0.3 1.3 1.3c-0.1 0.9-1.2 1.6-1.9 1.2c-0.6-0.4-0.2-1.3-0.9-1.6c-0.6-0.3-1.4 0.1-1.6-0.7c-0.1-0.5 0.1-1.1 0.4-1.6z" fill="#2f9d3e"/><path d="M7.2 1.5c0.6 0.4 1.1 1 1.3 1.7c-0.6 0.1-1.2-0.5-1.3-1.7z" fill="#2f9d3e"/></g><rect x="1.7" y="5.4" width="2.9" height="3" fill="#2a2a2a"/><rect x="2.3" y="6" width="1.6" height="0.7" fill="#bbb"/></svg>
<div style="left:74.5px;top:280.72px;line-height:10px;font-size:6.152px;color:#1e1e1e;font-weight:400;font-family:'Liberation Sans', sans-serif;white-space:nowrap;transform:scaleX(0.8696);transform-origin:0 50%;">GVL_Inputs</div>
<svg style="position:absolute;left:63.5px;top:288.96px" width="9" height="9" viewBox="0 0 9 9"><defs><radialGradient id="g" cx="0.35" cy="0.3" r="0.8"><stop offset="0" stop-color="#8fd4ff"/><stop offset="0.5" stop-color="#2f86d8"/><stop offset="1" stop-color="#1a4fa0"/></radialGradient></defs><circle cx="5.2" cy="4.6" r="3.5" fill="url(#g)"/><g transform="translate(0 0.3)"><path d="M3 2.2c0.8-0.9 2-1.2 2.6-0.5c0.5 0.6-0.4 1.2 0.1 1.9c0.5 0.7 1.4 0.3 1.3 1.3c-0.1 0.9-1.2 1.6-1.9 1.2c-0.6-0.4-0.2-1.3-0.9-1.6c-0.6-0.3-1.4 0.1-1.6-0.7c-0.1-0.5 0.1-1.1 0.4-1.6z" fill="#2f9d3e"/><path d="M7.2 1.5c0.6 0.4 1.1 1 1.3 1.7c-0.6 0.1-1.2-0.5-1.3-1.7z" fill="#2f9d3e"/></g><rect x="1.7" y="5.4" width="2.9" height="3" fill="#2a2a2a"/><rect x="2.3" y="6" width="1.6" height="0.7" fill="#bbb"/></svg>
<div style="left:74.5px;top:289.16px;line-height:10px;font-size:6.152px;color:#1e1e1e;font-weight:400;font-family:'Liberation Sans', sans-serif;white-space:nowrap;transform:scaleX(0.8696);transform-origin:0 50%;">GVL_Outputs</div>
<svg style="position:absolute;left:46.0px;top:299.4px" width="5" height="5" viewBox="0 0 5 5"><path d="M0.6 4.1h3.3v-3.3z" fill="#262626"/></svg>
<svg style="position:absolute;left:56.2px;top:299.0px" width="9" height="7" viewBox="0 0 9 7"><path d="M0.4 0.7h2.6l0.7 0.8h3.3v4.9h-6.6z" fill="#d9a234"/><path d="M0.4 6.4l1.5-3.7h6.8l-1.6 3.7z" fill="#f6d27a" stroke="#d39a2c" stroke-width="0.45"/></svg>
<div style="left:66.2px;top:297.60px;line-height:10px;font-size:6.152px;color:#1e1e1e;font-weight:400;font-family:'Liberation Sans', sans-serif;white-space:nowrap;transform:scaleX(0.8696);transform-origin:0 50%;">Safety</div>
<svg style="position:absolute;left:63.5px;top:305.84px" width="9" height="9" viewBox="0 0 9 9"><defs><radialGradient id="g" cx="0.35" cy="0.3" r="0.8"><stop offset="0" stop-color="#8fd4ff"/><stop offset="0.5" stop-color="#2f86d8"/><stop offset="1" stop-color="#1a4fa0"/></radialGradient></defs><circle cx="5.2" cy="4.6" r="3.5" fill="url(#g)"/><g transform="translate(0 0.3)"><path d="M3 2.2c0.8-0.9 2-1.2 2.6-0.5c0.5 0.6-0.4 1.2 0.1 1.9c0.5 0.7 1.4 0.3 1.3 1.3c-0.1 0.9-1.2 1.6-1.9 1.2c-0.6-0.4-0.2-1.3-0.9-1.6c-0.6-0.3-1.4 0.1-1.6-0.7c-0.1-0.5 0.1-1.1 0.4-1.6z" fill="#2f9d3e"/><path d="M7.2 1.5c0.6 0.4 1.1 1 1.3 1.7c-0.6 0.1-1.2-0.5-1.3-1.7z" fill="#2f9d3e"/></g><rect x="1.7" y="5.4" width="2.9" height="3" fill="#2a2a2a"/><rect x="2.3" y="6" width="1.6" height="0.7" fill="#bbb"/></svg>
<div style="left:74.5px;top:306.04px;line-height:10px;font-size:6.152px;color:#1e1e1e;font-weight:400;font-family:'Liberation Sans', sans-serif;white-space:nowrap;transform:scaleX(0.8696);transform-origin:0 50%;">GVL_SafetyIn</div>
<svg style="position:absolute;left:63.5px;top:314.28px" width="9" height="9" viewBox="0 0 9 9"><defs><radialGradient id="g" cx="0.35" cy="0.3" r="0.8"><stop offset="0" stop-color="#8fd4ff"/><stop offset="0.5" stop-color="#2f86d8"/><stop offset="1" stop-color="#1a4fa0"/></radialGradient></defs><circle cx="5.2" cy="4.6" r="3.5" fill="url(#g)"/><g transform="translate(0 0.3)"><path d="M3 2.2c0.8-0.9 2-1.2 2.6-0.5c0.5 0.6-0.4 1.2 0.1 1.9c0.5 0.7 1.4 0.3 1.3 1.3c-0.1 0.9-1.2 1.6-1.9 1.2c-0.6-0.4-0.2-1.3-0.9-1.6c-0.6-0.3-1.4 0.1-1.6-0.7c-0.1-0.5 0.1-1.1 0.4-1.6z" fill="#2f9d3e"/><path d="M7.2 1.5c0.6 0.4 1.1 1 1.3 1.7c-0.6 0.1-1.2-0.5-1.3-1.7z" fill="#2f9d3e"/></g><rect x="1.7" y="5.4" width="2.9" height="3" fill="#2a2a2a"/><rect x="2.3" y="6" width="1.6" height="0.7" fill="#bbb"/></svg>
<div style="left:74.5px;top:314.48px;line-height:10px;font-size:6.152px;color:#1e1e1e;font-weight:400;font-family:'Liberation Sans', sans-serif;white-space:nowrap;transform:scaleX(0.8696);transform-origin:0 50%;">GVL_SafetyOut</div>
<svg style="position:absolute;left:46.0px;top:324.71999999999997px" width="5" height="5" viewBox="0 0 5 5"><path d="M0.6 4.1h3.3v-3.3z" fill="#262626"/></svg>
<svg style="position:absolute;left:56.2px;top:324.32px" width="9" height="7" viewBox="0 0 9 7"><path d="M0.4 0.7h2.6l0.7 0.8h3.3v4.9h-6.6z" fill="#d9a234"/><path d="M0.4 6.4l1.5-3.7h6.8l-1.6 3.7z" fill="#f6d27a" stroke="#d39a2c" stroke-width="0.45"/></svg>
<div style="left:66.2px;top:322.92px;line-height:10px;font-size:6.152px;color:#1e1e1e;font-weight:400;font-family:'Liberation Sans', sans-serif;white-space:nowrap;transform:scaleX(0.8696);transform-origin:0 50%;">Visualisation</div>
<svg style="position:absolute;left:63.5px;top:331.15999999999997px" width="9" height="9" viewBox="0 0 9 9"><defs><radialGradient id="g" cx="0.35" cy="0.3" r="0.8"><stop offset="0" stop-color="#8fd4ff"/><stop offset="0.5" stop-color="#2f86d8"/><stop offset="1" stop-color="#1a4fa0"/></radialGradient></defs><circle cx="5.2" cy="4.6" r="3.5" fill="url(#g)"/><g transform="translate(0 0.3)"><path d="M3 2.2c0.8-0.9 2-1.2 2.6-0.5c0.5 0.6-0.4 1.2 0.1 1.9c0.5 0.7 1.4 0.3 1.3 1.3c-0.1 0.9-1.2 1.6-1.9 1.2c-0.6-0.4-0.2-1.3-0.9-1.6c-0.6-0.3-1.4 0.1-1.6-0.7c-0.1-0.5 0.1-1.1 0.4-1.6z" fill="#2f9d3e"/><path d="M7.2 1.5c0.6 0.4 1.1 1 1.3 1.7c-0.6 0.1-1.2-0.5-1.3-1.7z" fill="#2f9d3e"/></g><rect x="1.7" y="5.4" width="2.9" height="3" fill="#2a2a2a"/><rect x="2.3" y="6" width="1.6" height="0.7" fill="#bbb"/></svg>
<div style="left:74.5px;top:331.36px;line-height:10px;font-size:6.152px;color:#1e1e1e;font-weight:400;font-family:'Liberation Sans', sans-serif;white-space:nowrap;transform:scaleX(0.8696);transform-origin:0 50%;">GVL_VisuAxis</div>
<svg style="position:absolute;left:63.5px;top:339.59999999999997px" width="9" height="9" viewBox="0 0 9 9"><defs><radialGradient id="g" cx="0.35" cy="0.3" r="0.8"><stop offset="0" stop-color="#8fd4ff"/><stop offset="0.5" stop-color="#2f86d8"/><stop offset="1" stop-color="#1a4fa0"/></radialGradient></defs><circle cx="5.2" cy="4.6" r="3.5" fill="url(#g)"/><g transform="translate(0 0.3)"><path d="M3 2.2c0.8-0.9 2-1.2 2.6-0.5c0.5 0.6-0.4 1.2 0.1 1.9c0.5 0.7 1.4 0.3 1.3 1.3c-0.1 0.9-1.2 1.6-1.9 1.2c-0.6-0.4-0.2-1.3-0.9-1.6c-0.6-0.3-1.4 0.1-1.6-0.7c-0.1-0.5 0.1-1.1 0.4-1.6z" fill="#2f9d3e"/><path d="M7.2 1.5c0.6 0.4 1.1 1 1.3 1.7c-0.6 0.1-1.2-0.5-1.3-1.7z" fill="#2f9d3e"/></g><rect x="1.7" y="5.4" width="2.9" height="3" fill="#2a2a2a"/><rect x="2.3" y="6" width="1.6" height="0.7" fill="#bbb"/></svg>
<div style="left:74.5px;top:339.80px;line-height:10px;font-size:6.152px;color:#1e1e1e;font-weight:400;font-family:'Liberation Sans', sans-serif;white-space:nowrap;transform:scaleX(0.8696);transform-origin:0 50%;">GVL_VisuGeneral</div>
<svg style="position:absolute;left:37.7px;top:350.03999999999996px" width="5" height="5" viewBox="0 0 5 5"><path d="M0.6 4.1h3.3v-3.3z" fill="#262626"/></svg>
<svg style="position:absolute;left:47.9px;top:349.64px" width="9" height="7" viewBox="0 0 9 7"><path d="M0.4 0.7h2.6l0.7 0.8h3.3v4.9h-6.6z" fill="#d9a234"/><path d="M0.4 6.4l1.5-3.7h6.8l-1.6 3.7z" fill="#f6d27a" stroke="#d39a2c" stroke-width="0.45"/></svg>
<div style="left:57.9px;top:348.24px;line-height:10px;font-size:6.152px;color:#1e1e1e;font-weight:400;font-family:'Liberation Sans', sans-serif;white-space:nowrap;transform:scaleX(0.8696);transform-origin:0 50%;">POUs</div>
<svg style="position:absolute;left:46.0px;top:357.97999999999996px" width="5" height="6" viewBox="0 0 5 6"><path d="M1.2 0.9l2.5 2.1l-2.5 2.1z" fill="#fff" stroke="#4a4a4a" stroke-width="0.75" stroke-linejoin="round"/></svg>
<svg style="position:absolute;left:56.2px;top:358.08px" width="9" height="7" viewBox="0 0 9 7"><path d="M0.4 0.7h2.7l0.7 0.8h3.6v4.9h-7z" fill="#d9a234"/><rect x="0.6" y="2.2" width="6.6" height="4" fill="#f0c04a"/><rect x="0.6" y="2.2" width="6.6" height="1.4" fill="#fae19a"/></svg>
<div style="left:66.2px;top:356.68px;line-height:10px;font-size:6.152px;color:#1e1e1e;font-weight:400;font-family:'Liberation Sans', sans-serif;white-space:nowrap;transform:scaleX(0.8696);transform-origin:0 50%;">_Library</div>
<svg style="position:absolute;left:46.0px;top:366.41999999999996px" width="5" height="6" viewBox="0 0 5 6"><path d="M1.2 0.9l2.5 2.1l-2.5 2.1z" fill="#fff" stroke="#4a4a4a" stroke-width="0.75" stroke-linejoin="round"/></svg>
<svg style="position:absolute;left:56.2px;top:366.52px" width="9" height="7" viewBox="0 0 9 7"><path d="M0.4 0.7h2.7l0.7 0.8h3.6v4.9h-7z" fill="#d9a234"/><rect x="0.6" y="2.2" width="6.6" height="4" fill="#f0c04a"/><rect x="0.6" y="2.2" width="6.6" height="1.4" fill="#fae19a"/></svg>
<div style="left:66.2px;top:365.12px;line-height:10px;font-size:6.152px;color:#1e1e1e;font-weight:400;font-family:'Liberation Sans', sans-serif;white-space:nowrap;transform:scaleX(0.8696);transform-origin:0 50%;">Automatic</div>
<svg style="position:absolute;left:46.0px;top:374.85999999999996px" width="5" height="6" viewBox="0 0 5 6"><path d="M1.2 0.9l2.5 2.1l-2.5 2.1z" fill="#fff" stroke="#4a4a4a" stroke-width="0.75" stroke-linejoin="round"/></svg>
<svg style="position:absolute;left:56.2px;top:374.96px" width="9" height="7" viewBox="0 0 9 7"><path d="M0.4 0.7h2.7l0.7 0.8h3.6v4.9h-7z" fill="#d9a234"/><rect x="0.6" y="2.2" width="6.6" height="4" fill="#f0c04a"/><rect x="0.6" y="2.2" width="6.6" height="1.4" fill="#fae19a"/></svg>
<div style="left:66.2px;top:373.56px;line-height:10px;font-size:6.152px;color:#1e1e1e;font-weight:400;font-family:'Liberation Sans', sans-serif;white-space:nowrap;transform:scaleX(0.8696);transform-origin:0 50%;">Devices</div>
<svg style="position:absolute;left:46.0px;top:383.79999999999995px" width="5" height="5" viewBox="0 0 5 5"><path d="M0.6 4.1h3.3v-3.3z" fill="#262626"/></svg>
<svg style="position:absolute;left:56.2px;top:383.4px" width="9" height="7" viewBox="0 0 9 7"><path d="M0.4 0.7h2.6l0.7 0.8h3.3v4.9h-6.6z" fill="#d9a234"/><path d="M0.4 6.4l1.5-3.7h6.8l-1.6 3.7z" fill="#f6d27a" stroke="#d39a2c" stroke-width="0.45"/></svg>
<div style="left:66.2px;top:382.00px;line-height:10px;font-size:6.152px;color:#1e1e1e;font-weight:400;font-family:'Liberation Sans', sans-serif;white-space:nowrap;transform:scaleX(0.8696);transform-origin:0 50%;">General</div>
</div>
<div style="left:2px;top:427px;width:64.7px;height:10px;background:#FFFFFF;"></div>
<div style="left:4.5px;top:427.40px;line-height:10px;font-size:6.325px;color:#000;font-weight:400;font-family:'Liberation Sans', sans-serif;white-space:nowrap;transform:scaleX(0.8696);transform-origin:0 50%;">Projektmappen-Explorer</div>
<div style="left:66.7px;top:427px;width:41px;height:10px;background:#4D6082;"></div>
<div style="left:70px;top:427.40px;line-height:10px;font-size:6.325px;color:#fff;font-weight:400;font-family:'Liberation Sans', sans-serif;white-space:nowrap;transform:scaleX(0.8696);transform-origin:0 50%;">Team Explorer</div>
<div style="left:192px;top:2px;width:118px;height:8.8px;background:#32446A;"></div>
<div style="left:194px;top:1.80px;line-height:10px;font-size:6.325px;color:#fff;font-weight:400;font-family:'Liberation Sans', sans-serif;white-space:nowrap;transform:scaleX(0.8087);transform-origin:0 50%;">GVL_VisuGeneral</div>
<div style="left:258px;top:1.80px;line-height:10px;font-size:6.325px;color:#fff;font-weight:400;font-family:'Liberation Sans', sans-serif;white-space:nowrap;transform:scaleX(0.8696);transform-origin:0 50%;">Visualisation</div>
<div style="left:310px;top:2px;width:61.8px;height:9.2px;background:#4D5F80;"></div>
<div style="left:312px;top:1.80px;line-height:10px;font-size:6.325px;color:#fff;font-weight:400;font-family:'Liberation Sans', sans-serif;white-space:nowrap;transform:scaleX(0.8696);transform-origin:0 50%;">OperatingHours</div>
<svg style="position:absolute;left:355px;top:3px" width="16" height="8" viewBox="0 0 16 8"><path d="M1.8 3.8h1.8M3.6 2.3v3M3.6 2.9h2.4v1.8h-2.4" stroke="#e6e9f0" stroke-width="0.7" fill="none"/><path d="M10.3 2l3.4 3.4M13.7 2l-3.4 3.4" stroke="#fff" stroke-width="0.8"/></svg>
<svg style="position:absolute;left:748px;top:4px" width="8" height="6" viewBox="0 0 8 6"><path d="M1.5 1.5h4.4l-2.2 2.2z" fill="#e6e9f0"/></svg>
<div style="left:192px;top:11.5px;width:563px;height:310.3px;background:#FFFFFF;"></div>
<div style="left:744px;top:11.5px;width:11px;height:92.8px;background:linear-gradient(to right,#ffffff,#d5d8bd);"></div>
<svg style="position:absolute;left:744px;top:12px" width="10" height="22" viewBox="0 0 10 22"><rect x="0.5" y="0.5" width="8.5" height="9" fill="#dde6f5" stroke="#8fa8d8" stroke-width="0.7"/><rect x="2" y="2" width="1.2" height="6" fill="#5a66d8"/><rect x="3.5" y="2.5" width="4" height="3" fill="#777"/><rect x="3.5" y="5.5" width="4" height="2.3" fill="#6bb56b"/><rect x="1.5" y="12.5" width="7" height="7" fill="#eee" stroke="#444" stroke-width="0.8"/><rect x="1.5" y="12.2" width="7" height="1.3" fill="#4b5ae0"/></svg>
<div style="left:214px;top:11.5px;width:0.8px;height:92.8px;background:#C4C4C4;"></div>
<div style="left:214.8px;top:11.5px;width:8.2px;height:92.8px;background:#F2F2F2;"></div>
<div style="left:198px;top:11.30px;width:15.5px;text-align:right;line-height:10px;font-family:'Liberation Mono', monospace;font-size:5.1px;color:#E03030;white-space:pre;-webkit-text-stroke:0">1</div>
<div style="left:225.9px;top:11.30px;line-height:10px;font-family:'Liberation Mono', monospace;font-size:5.47px;white-space:pre;-webkit-text-stroke:0"><span style="color:#1010E0;-webkit-text-stroke:0.12px #1010E0">PROGRAM</span><span style="color:#000"> OperatingHours</span></div>
<div style="left:198px;top:19.15px;width:15.5px;text-align:right;line-height:10px;font-family:'Liberation Mono', monospace;font-size:5.1px;color:#5A8AC8;white-space:pre;-webkit-text-stroke:0">2</div>
<div style="left:225.9px;top:19.15px;line-height:10px;font-family:'Liberation Mono', monospace;font-size:5.47px;white-space:pre;-webkit-text-stroke:0"><span style="color:#1010E0;-webkit-text-stroke:0.12px #1010E0">VAR</span></div>
<div style="left:198px;top:27.00px;width:15.5px;text-align:right;line-height:10px;font-family:'Liberation Mono', monospace;font-size:5.1px;color:#5A8AC8;white-space:pre;-webkit-text-stroke:0">3</div>
<div style="left:225.9px;top:27.00px;line-height:10px;font-family:'Liberation Mono', monospace;font-size:5.47px;white-space:pre;-webkit-text-stroke:0"><span style="color:#1010E0;-webkit-text-stroke:0.12px #1010E0">END_VAR</span></div>
<div style="left:198px;top:34.85px;width:15.5px;text-align:right;line-height:10px;font-family:'Liberation Mono', monospace;font-size:5.1px;color:#5A8AC8;white-space:pre;-webkit-text-stroke:0">4</div>
<div style="left:225.9px;top:34.85px;line-height:10px;font-family:'Liberation Mono', monospace;font-size:5.47px;white-space:pre;-webkit-text-stroke:0"></div>
<div style="left:711.7px;top:95.3px;width:22.6px;height:9px;background:#F0F0F0;box-shadow:inset 0 0 0 0.6px #cfcfcf"></div>
<div style="left:719.3px;top:95.10px;line-height:10px;font-size:5.290px;color:#333;font-weight:400;font-family:'Liberation Sans', sans-serif;white-space:nowrap;transform:scaleX(0.8696);transform-origin:0 50%;">100</div>
<div style="left:734.3px;top:95.3px;width:9.4px;height:9px;background:#FAFAFA;box-shadow:inset 0 0 0 0.6px #cfcfcf"></div>
<svg style="position:absolute;left:734.3px;top:95.3px" width="10" height="10" viewBox="0 0 10 10"><rect x="1" y="5" width="3" height="3.6" fill="#eee" stroke="#888" stroke-width="0.4"/><circle cx="4.6" cy="3.9" r="2.3" fill="#3fa8a8" stroke="#222" stroke-width="0.8"/><path d="M6.3 5.6l2.3 2.3" stroke="#111" stroke-width="1.1"/></svg>
<div style="left:192px;top:104.3px;width:563px;height:3.4px;background:#E2E2E2;border-top:0.6px solid #c8c8c8;border-bottom:0.6px solid #c8c8c8;box-sizing:border-box"></div>
<svg style="position:absolute;left:466px;top:104px" width="14" height="4" viewBox="0 0 14 4"><path d="M2 3l1.5-1.8l1.5 1.8z" fill="#777"/><path d="M10 1.2l1.6 1.8l1.6-1.8z" fill="#777"/></svg>
<div style="left:214px;top:107.7px;width:0.8px;height:214.1px;background:#C4C4C4;"></div>
<div style="left:214.8px;top:107.7px;width:8.2px;height:214.1px;background:#F2F2F2;"></div>
<div style="left:198px;top:107.00px;width:15.5px;text-align:right;line-height:10px;font-family:'Liberation Mono', monospace;font-size:5.1px;color:#E03030;white-space:pre;-webkit-text-stroke:0">1</div>
<div style="left:225.9px;top:107.00px;line-height:10px;font-family:'Liberation Mono', monospace;font-size:5.47px;white-space:pre;-webkit-text-stroke:0"><span style="color:#008080;font-style:italic">(* Start counter for total hours *)</span></div>
<div style="left:198px;top:114.97px;width:15.5px;text-align:right;line-height:10px;font-family:'Liberation Mono', monospace;font-size:5.1px;color:#5A8AC8;white-space:pre;-webkit-text-stroke:0">2</div>
<div style="left:225.9px;top:114.97px;line-height:10px;font-family:'Liberation Mono', monospace;font-size:5.47px;white-space:pre;-webkit-text-stroke:0"><span style="color:#1010E0;-webkit-text-stroke:0.12px #1010E0">IF</span><span style="color:#0000FF"> (</span><span style="color:#1010E0;-webkit-text-stroke:0.12px #1010E0">NOT</span><span style="color:#000"> GVL_General.fbOperatingHoursTotal.IsActive</span><span style="color:#0000FF">)</span><span style="color:#000"> </span><span style="color:#1010E0;-webkit-text-stroke:0.12px #1010E0">THEN</span><span style="color:#000"> GVL_General.fbOperatingHoursTotal.Start</span><span style="color:#0000FF">();</span><span style="color:#000"> </span><span style="color:#1010E0;-webkit-text-stroke:0.12px #1010E0">END_IF</span></div>
<div style="left:198px;top:122.94px;width:15.5px;text-align:right;line-height:10px;font-family:'Liberation Mono', monospace;font-size:5.1px;color:#5A8AC8;white-space:pre;-webkit-text-stroke:0">3</div>
<div style="left:225.9px;top:122.94px;line-height:10px;font-family:'Liberation Mono', monospace;font-size:5.47px;white-space:pre;-webkit-text-stroke:0"></div>
<div style="left:198px;top:130.91px;width:15.5px;text-align:right;line-height:10px;font-family:'Liberation Mono', monospace;font-size:5.1px;color:#5A8AC8;white-space:pre;-webkit-text-stroke:0">4</div>
<div style="left:225.9px;top:130.91px;line-height:10px;font-family:'Liberation Mono', monospace;font-size:5.47px;white-space:pre;-webkit-text-stroke:0"><span style="color:#008080;font-style:italic">(* Start and stop counter for active hours *)</span></div>
<div style="left:198px;top:138.88px;width:15.5px;text-align:right;line-height:10px;font-family:'Liberation Mono', monospace;font-size:5.1px;color:#5A8AC8;white-space:pre;-webkit-text-stroke:0">5</div>
<div style="left:225.9px;top:138.88px;line-height:10px;font-family:'Liberation Mono', monospace;font-size:5.47px;white-space:pre;-webkit-text-stroke:0"><span style="color:#1010E0;-webkit-text-stroke:0.12px #1010E0">IF</span><span style="color:#0000FF"> (</span><span style="color:#000">GVL_General.bMachineOn </span><span style="color:#1010E0;-webkit-text-stroke:0.12px #1010E0">AND</span><span style="color:#000"> </span><span style="color:#1010E0;-webkit-text-stroke:0.12px #1010E0">NOT</span><span style="color:#000"> GVL_General.fbOperatingHoursActive.IsActive</span><span style="color:#0000FF">)</span><span style="color:#000"> </span><span style="color:#1010E0;-webkit-text-stroke:0.12px #1010E0">THEN</span></div>
<div style="left:198px;top:146.85px;width:15.5px;text-align:right;line-height:10px;font-family:'Liberation Mono', monospace;font-size:5.1px;color:#5A8AC8;white-space:pre;-webkit-text-stroke:0">6</div>
<div style="left:225.9px;top:146.85px;line-height:10px;font-family:'Liberation Mono', monospace;font-size:5.47px;white-space:pre;-webkit-text-stroke:0"><span style="color:#000">    GVL_General.fbOperatingHoursActive.Start</span><span style="color:#0000FF">();</span></div>
<div style="left:198px;top:154.82px;width:15.5px;text-align:right;line-height:10px;font-family:'Liberation Mono', monospace;font-size:5.1px;color:#5A8AC8;white-space:pre;-webkit-text-stroke:0">7</div>
<div style="left:225.9px;top:154.82px;line-height:10px;font-family:'Liberation Mono', monospace;font-size:5.47px;white-space:pre;-webkit-text-stroke:0"><span style="color:#1010E0;-webkit-text-stroke:0.12px #1010E0">ELSIF</span><span style="color:#0000FF"> (</span><span style="color:#000">GVL_General.fbOperatingHoursActive.IsActive</span><span style="color:#0000FF">)</span><span style="color:#000"> </span><span style="color:#1010E0;-webkit-text-stroke:0.12px #1010E0">THEN</span></div>
<div style="left:198px;top:162.79px;width:15.5px;text-align:right;line-height:10px;font-family:'Liberation Mono', monospace;font-size:5.1px;color:#5A8AC8;white-space:pre;-webkit-text-stroke:0">8</div>
<div style="left:225.9px;top:162.79px;line-height:10px;font-family:'Liberation Mono', monospace;font-size:5.47px;white-space:pre;-webkit-text-stroke:0"><span style="color:#000">    GVL_General.fbOperatingHoursActive.Stop</span><span style="color:#0000FF">();</span></div>
<div style="left:198px;top:170.76px;width:15.5px;text-align:right;line-height:10px;font-family:'Liberation Mono', monospace;font-size:5.1px;color:#5A8AC8;white-space:pre;-webkit-text-stroke:0">9</div>
<div style="left:225.9px;top:170.76px;line-height:10px;font-family:'Liberation Mono', monospace;font-size:5.47px;white-space:pre;-webkit-text-stroke:0"><span style="color:#1010E0;-webkit-text-stroke:0.12px #1010E0">END_IF</span></div>
<div style="left:198px;top:178.73px;width:15.5px;text-align:right;line-height:10px;font-family:'Liberation Mono', monospace;font-size:5.1px;color:#5A8AC8;white-space:pre;-webkit-text-stroke:0">10</div>
<div style="left:225.9px;top:178.73px;line-height:10px;font-family:'Liberation Mono', monospace;font-size:5.47px;white-space:pre;-webkit-text-stroke:0"></div>
<div style="left:198px;top:186.70px;width:15.5px;text-align:right;line-height:10px;font-family:'Liberation Mono', monospace;font-size:5.1px;color:#5A8AC8;white-space:pre;-webkit-text-stroke:0">11</div>
<div style="left:225.9px;top:186.70px;line-height:10px;font-family:'Liberation Mono', monospace;font-size:5.47px;white-space:pre;-webkit-text-stroke:0"><span style="color:#008080;font-style:italic">(* Instance calls *)</span></div>
<div style="left:198px;top:194.67px;width:15.5px;text-align:right;line-height:10px;font-family:'Liberation Mono', monospace;font-size:5.1px;color:#5A8AC8;white-space:pre;-webkit-text-stroke:0">12</div>
<div style="left:225.9px;top:194.67px;line-height:10px;font-family:'Liberation Mono', monospace;font-size:5.47px;white-space:pre;-webkit-text-stroke:0"><span style="color:#000">GVL_General.fbOperatingHoursTotal</span><span style="color:#0000FF">(</span><span style="color:#000">nCounter:=GVL_General.nOperatingHoursTotal </span><span style="color:#0000FF">);</span></div>
<div style="left:198px;top:202.64px;width:15.5px;text-align:right;line-height:10px;font-family:'Liberation Mono', monospace;font-size:5.1px;color:#5A8AC8;white-space:pre;-webkit-text-stroke:0">13</div>
<div style="left:225.9px;top:202.64px;line-height:10px;font-family:'Liberation Mono', monospace;font-size:5.47px;white-space:pre;-webkit-text-stroke:0"><span style="color:#000">GVL_General.fbOperatingHoursActive</span><span style="color:#0000FF">(</span><span style="color:#000">nCounter:=GVL_General.nOperatingHoursActive </span><span style="color:#0000FF">);</span></div>
<div style="left:198px;top:210.61px;width:15.5px;text-align:right;line-height:10px;font-family:'Liberation Mono', monospace;font-size:5.1px;color:#5A8AC8;white-space:pre;-webkit-text-stroke:0">14</div>
<div style="left:225.9px;top:210.61px;line-height:10px;font-family:'Liberation Mono', monospace;font-size:5.47px;white-space:pre;-webkit-text-stroke:0"></div>
<svg style="position:absolute;left:194.5px;top:140.18px" width="6" height="5" viewBox="0 0 6 5"><rect x="0.5" y="0.5" width="4" height="4" fill="#e8eef0" stroke="#8aa" stroke-width="0.5"/><path d="M1.3 2.5h2.4" stroke="#333" stroke-width="0.6"/></svg>
<svg style="position:absolute;left:194.5px;top:156.12px" width="6" height="5" viewBox="0 0 6 5"><rect x="0.5" y="0.5" width="4" height="4" fill="#e8eef0" stroke="#8aa" stroke-width="0.5"/><path d="M1.3 2.5h2.4" stroke="#333" stroke-width="0.6"/></svg>
<div style="left:723px;top:312px;width:22px;height:9.2px;background:#F0F0F0;box-shadow:inset 0 0 0 0.6px #cfcfcf"></div>
<div style="left:730.2px;top:312.00px;line-height:10px;font-size:5.290px;color:#333;font-weight:400;font-family:'Liberation Sans', sans-serif;white-space:nowrap;transform:scaleX(0.8696);transform-origin:0 50%;">100</div>
<div style="left:745px;top:312px;width:9.6px;height:9.2px;background:#FAFAFA;box-shadow:inset 0 0 0 0.6px #cfcfcf"></div>
<svg style="position:absolute;left:745px;top:312px" width="10" height="10" viewBox="0 0 10 10"><rect x="1" y="5" width="3" height="3.6" fill="#eee" stroke="#888" stroke-width="0.4"/><circle cx="4.6" cy="3.9" r="2.3" fill="#3fa8a8" stroke="#222" stroke-width="0.8"/><path d="M6.3 5.6l2.3 2.3" stroke="#111" stroke-width="1.1"/></svg>
<div style="left:192px;top:325px;width:563px;height:10px;background:#4D6082;"></div>
<div style="left:194.5px;top:325.90px;line-height:10px;font-size:6.325px;color:#fff;font-weight:400;font-family:'Liberation Sans', sans-serif;white-space:nowrap;transform:scaleX(0.8696);transform-origin:0 50%;">Fehlerliste</div>
<svg style="position:absolute;left:731px;top:327px" width="24" height="7" viewBox="0 0 24 7"><path d="M1.5 2h4l-2 2z" fill="#e6e9f0"/><rect x="9.5" y="0.8" width="2.3" height="2.8" fill="none" stroke="#e6e9f0" stroke-width="0.7"/><path d="M9 3.6h3.3M10.65 3.6v2" stroke="#e6e9f0" stroke-width="0.7"/><path d="M16.5 1l3.4 3.4M19.9 1l-3.4 3.4" stroke="#e6e9f0" stroke-width="0.8"/></svg>
<div style="left:192px;top:335px;width:563px;height:12px;background:#CFD6E5;"></div>
<div style="left:195.3px;top:336.6px;width:69.4px;height:9.3px;background:#FFFFFF;"></div>
<div style="left:197.5px;top:336.90px;line-height:10px;font-size:6.325px;color:#1e1e1e;font-weight:400;font-family:'Liberation Sans', sans-serif;white-space:nowrap;transform:scaleX(0.8696);transform-origin:0 50%;">Gesamte Projektmappe</div>
<svg style="position:absolute;left:260.5px;top:339.3px" width="6" height="5" viewBox="0 0 6 5"><path d="M1 1.5h3l-1.5 1.5z" fill="#333"/></svg>
<div style="left:271px;top:336px;width:34px;height:10.2px;background:#FFFFFF;box-shadow:inset 0 0 0 0.7px #7f8db0"></div>
<svg style="position:absolute;left:273px;top:337.5px" width="8" height="8" viewBox="0 0 8 8"><circle cx="3.8" cy="3.8" r="3.1" fill="#e0202a"/><path d="M2.4 2.4l2.8 2.8M5.2 2.4l-2.8 2.8" stroke="#fff" stroke-width="0.9"/></svg>
<div style="left:281.5px;top:336.90px;line-height:10px;font-size:6.325px;color:#1e1e1e;font-weight:400;font-family:'Liberation Sans', sans-serif;white-space:nowrap;transform:scaleX(0.8696);transform-origin:0 50%;">0 Fehler</div>
<div style="left:307.5px;top:336px;width:43px;height:10.2px;background:#FFFFFF;box-shadow:inset 0 0 0 0.7px #7f8db0"></div>
<svg style="position:absolute;left:309.5px;top:337.5px" width="8" height="8" viewBox="0 0 8 8"><path d="M3.8 0.7l3.3 6.3h-6.6z" fill="#f3c41c" stroke="#e0a800" stroke-width="0.3"/><rect x="3.45" y="2.6" width="0.7" height="2.4" fill="#111"/><rect x="3.45" y="5.4" width="0.7" height="0.7" fill="#111"/></svg>
<div style="left:318.5px;top:336.90px;line-height:10px;font-size:6.325px;color:#1e1e1e;font-weight:400;font-family:'Liberation Sans', sans-serif;white-space:nowrap;transform:scaleX(0.8696);transform-origin:0 50%;">1 Warnung</div>
<div style="left:352.5px;top:337px;width:0.6px;height:8px;background:#b5bdcc;"></div>
<svg style="position:absolute;left:355.5px;top:337.5px" width="8" height="8" viewBox="0 0 8 8"><circle cx="3.6" cy="3.8" r="3.1" fill="#1c86e0"/><rect x="3.2" y="3" width="0.9" height="3" fill="#fff"/><rect x="3.2" y="1.6" width="0.9" height="0.9" fill="#fff"/></svg>
<div style="left:364.5px;top:336.90px;line-height:10px;font-size:6.325px;color:#1e1e1e;font-weight:400;font-family:'Liberation Sans', sans-serif;white-space:nowrap;transform:scaleX(0.8696);transform-origin:0 50%;">0 Mitteilungen</div>
<div style="left:406px;top:337px;width:0.6px;height:8px;background:#b5bdcc;"></div>
<div style="left:409.5px;top:336.90px;line-height:10px;font-size:6.325px;color:#1e1e1e;font-weight:400;font-family:'Liberation Sans', sans-serif;white-space:nowrap;transform:scaleX(0.8696);transform-origin:0 50%;">Löschen</div>
<div style="left:436.5px;top:337px;width:0.6px;height:8px;background:#b5bdcc;"></div>
<div style="left:439.5px;top:336.5px;width:70px;height:9px;background:#FFFFFF;"></div>
<div style="left:441.5px;top:336.90px;line-height:10px;font-size:6.325px;color:#1e1e1e;font-weight:400;font-family:'Liberation Sans', sans-serif;white-space:nowrap;transform:scaleX(0.8696);transform-origin:0 50%;">Erstellen + IntelliSense</div>
<svg style="position:absolute;left:504px;top:339px" width="6" height="5" viewBox="0 0 6 5"><path d="M1 1.5h3l-1.5 1.5z" fill="#333"/></svg>
<div style="left:661.2px;top:336.3px;width:92.8px;height:9.4px;background:#FFFFFF;"></div>
<div style="left:663px;top:336.90px;line-height:10px;font-size:6.325px;color:#858585;font-weight:400;font-family:'Liberation Sans', sans-serif;white-space:nowrap;transform:scaleX(0.8696);transform-origin:0 50%;">Fehlerliste durchsuchen</div>
<svg style="position:absolute;left:741.5px;top:337px" width="14" height="8" viewBox="0 0 14 8"><circle cx="4.2" cy="3" r="1.5" fill="none" stroke="#333" stroke-width="0.8"/><path d="M3.2 4.1l-1.8 1.9" stroke="#333" stroke-width="0.9"/><path d="M8.5 3.6h2.2l-1.1 1.1z" fill="#555"/></svg>
<div style="left:192px;top:347px;width:563px;height:80px;background:#FFFFFF;"></div>
<div style="left:192px;top:347px;width:563px;height:9.5px;background:#F5F5F5;border-bottom:0.6px solid #e5e5e5;box-sizing:border-box"></div>
<div style="left:205.6px;top:347.5px;width:0.6px;height:8.5px;background:#e0e0e0;"></div>
<div style="left:217.8px;top:347.5px;width:0.6px;height:8.5px;background:#e0e0e0;"></div>
<div style="left:634.8px;top:347.5px;width:0.6px;height:8.5px;background:#e0e0e0;"></div>
<div style="left:681.4px;top:347.5px;width:0.6px;height:8.5px;background:#e0e0e0;"></div>
<div style="left:728.4px;top:347.5px;width:0.6px;height:8.5px;background:#e0e0e0;"></div>
<div style="left:745.2px;top:347.5px;width:0.6px;height:8.5px;background:#e0e0e0;"></div>
<svg style="position:absolute;left:211.8px;top:348.5px" width="5" height="5" viewBox="0 0 5 5"><path d="M0.6 0.6h3v3z" fill="#666"/></svg>
<div style="left:219px;top:347.60px;line-height:10px;font-size:6.325px;color:#1e1e1e;font-weight:400;font-family:'Liberation Sans', sans-serif;white-space:nowrap;transform:scaleX(0.8696);transform-origin:0 50%;">Beschreibung</div>
<div style="left:636.5px;top:347.60px;line-height:10px;font-size:6.325px;color:#1e1e1e;font-weight:400;font-family:'Liberation Sans', sans-serif;white-space:nowrap;transform:scaleX(0.8696);transform-origin:0 50%;">Projekt</div>
<div style="left:683px;top:347.60px;line-height:10px;font-size:6.325px;color:#1e1e1e;font-weight:400;font-family:'Liberation Sans', sans-serif;white-space:nowrap;transform:scaleX(0.8696);transform-origin:0 50%;">Datei</div>
<div style="left:730px;top:347.60px;line-height:10px;font-size:6.325px;color:#1e1e1e;font-weight:400;font-family:'Liberation Sans', sans-serif;white-space:nowrap;transform:scaleX(0.8696);transform-origin:0 50%;">Ze...</div>
<svg style="position:absolute;left:205.5px;top:357.5px" width="8" height="8" viewBox="0 0 8 8"><path d="M3.8 0.7l3.3 6.3h-6.6z" fill="#f3c41c" stroke="#e0a800" stroke-width="0.3"/><rect x="3.45" y="2.6" width="0.7" height="2.4" fill="#111"/><rect x="3.45" y="5.4" width="0.7" height="0.7" fill="#111"/></svg>
<div style="left:216.5px;top:357.30px;line-height:10px;font-size:6.325px;color:#1e1e1e;font-weight:400;font-family:'Liberation Sans', sans-serif;white-space:nowrap;transform:scaleX(0.8696);transform-origin:0 50%;">New Version found for Visualisierungsprofil</div>
<div style="left:728.8px;top:357.30px;line-height:10px;font-size:6.325px;color:#1e1e1e;font-weight:400;font-family:'Liberation Sans', sans-serif;white-space:nowrap;transform:scaleX(0.8696);transform-origin:0 50%;">0</div>
<div style="left:192px;top:427px;width:30px;height:10px;background:#FFFFFF;"></div>
<div style="left:194.5px;top:427.40px;line-height:10px;font-size:6.325px;color:#000;font-weight:400;font-family:'Liberation Sans', sans-serif;white-space:nowrap;transform:scaleX(0.8696);transform-origin:0 50%;">Fehlerliste</div>
<div style="left:222px;top:427px;width:26.6px;height:10px;background:#4D6082;"></div>
<div style="left:224.5px;top:427.40px;line-height:10px;font-size:6.325px;color:#fff;font-weight:400;font-family:'Liberation Sans', sans-serif;white-space:nowrap;transform:scaleX(0.8696);transform-origin:0 50%;">Ausgabe</div>
<div style="left:758.5px;top:2px;width:138.7px;height:10px;background:#4D6082;"></div>
<div style="left:761px;top:2.20px;line-height:10px;font-size:6.325px;color:#fff;font-weight:400;font-family:'Liberation Sans', sans-serif;white-space:nowrap;transform:scaleX(0.8696);transform-origin:0 50%;">Eigenschaften</div>
<svg style="position:absolute;left:873px;top:3.5px" width="24" height="7" viewBox="0 0 24 7"><path d="M1.5 2h4l-2 2z" fill="#e6e9f0"/><rect x="9.5" y="0.8" width="2.3" height="2.8" fill="none" stroke="#e6e9f0" stroke-width="0.7"/><path d="M9 3.6h3.3M10.65 3.6v2" stroke="#e6e9f0" stroke-width="0.7"/><path d="M16.5 1l3.4 3.4M19.9 1l-3.4 3.4" stroke="#e6e9f0" stroke-width="0.8"/></svg>
<div style="left:758.5px;top:12px;width:138.7px;height:415px;background:#FFFFFF;"></div>
<div style="left:761px;top:12.50px;line-height:10px;font-size:6.440px;color:#000;font-weight:700;font-family:'Liberation Sans', sans-serif;white-space:nowrap;transform:scaleX(0.8696);transform-origin:0 50%;">OperatingHours</div>
<div style="left:806px;top:12.50px;line-height:10px;font-size:6.440px;color:#1e1e1e;font-weight:400;font-family:'Liberation Sans', sans-serif;white-space:nowrap;transform:scaleX(0.8696);transform-origin:0 50%;">File Properties</div>
<svg style="position:absolute;left:891px;top:16px" width="5" height="4" viewBox="0 0 5 4"><path d="M0.8 1h3l-1.5 1.5z" fill="#333"/></svg>
<div style="left:758.5px;top:24px;width:138.7px;height:11.5px;background:#CFD6E5;"></div>
<svg style="position:absolute;left:760px;top:25px" width="40" height="10" viewBox="0 0 40 10"><rect x="0.3" y="0.3" width="9.4" height="9.4" fill="#f4f4f4" stroke="#8d9bb8" stroke-width="0.6"/><rect x="2" y="2" width="2.4" height="2.4" fill="#333"/><rect x="2" y="5.4" width="2.4" height="2.6" fill="#333"/><rect x="5" y="2" width="2.8" height="6" fill="#888"/><rect x="11.5" y="1.5" width="2.7" height="6.5" fill="#555"/><rect x="12" y="2.2" width="1.5" height="1.8" fill="#ddd"/><path d="M16 3v4M15 6l1 1.5l1-1.5" stroke="#2a6fd0" stroke-width="0.9" fill="none"/><rect x="23.2" y="1" width="0.6" height="8.5" fill="#b0b8c8"/><path d="M26.8 8.6l3.3-3.3" stroke="#a8acb4" stroke-width="1.3"/><circle cx="31" cy="3.6" r="1.7" fill="none" stroke="#a8acb4" stroke-width="1.1"/><path d="M31.3 2.6l1.3-1.1" stroke="#cfd6e5" stroke-width="0.9"/></svg>
<div style="left:758.5px;top:35.7px;width:8.5px;height:178.6px;background:#F0F0F0;"></div>
<div style="left:758.5px;top:35.7px;width:138.7px;height:8.93px;background:#F0F0F0;"></div>
<svg style="position:absolute;left:759.8px;top:37.565000000000005px" width="6" height="6" viewBox="0 0 6 6"><rect x="0.5" y="0.5" width="4.2" height="4.2" fill="#f8f8f8" stroke="#444" stroke-width="0.55"/><path d="M1.4 2.6h2.4" stroke="#222" stroke-width="0.6"/></svg>
<div style="left:768px;top:35.87px;line-height:10px;font-size:6.440px;color:#111;font-weight:700;font-family:'Liberation Sans', sans-serif;white-space:nowrap;transform:scaleX(0.8696);transform-origin:0 50%;">Advanced</div>
<div style="left:767px;top:53.06px;width:130.2px;height:0.5px;background:#F0F0F0;"></div>
<div style="left:826px;top:44.63px;width:0.5px;height:8.93px;background:#F0F0F0;"></div>
<div style="left:767px;top:44.63px;width:59px;height:8.93px;background:#F0F0F0;"></div>
<div style="left:768px;top:44.80px;width:65.55px;overflow:hidden;line-height:10px;font-size:6.440px;color:#1e1e1e;font-family:'Liberation Sans', sans-serif;white-space:nowrap;transform:scaleX(0.8696);transform-origin:0 50%">Compilerdefinitionen</div>
<div style="left:827.5px;top:44.80px;width:79.35px;overflow:hidden;line-height:10px;font-size:6.440px;color:#1e1e1e;font-family:'Liberation Sans', sans-serif;white-space:nowrap;transform:scaleX(0.8696);transform-origin:0 50%"></div>
<div style="left:767px;top:61.99px;width:130.2px;height:0.5px;background:#F0F0F0;"></div>
<div style="left:826px;top:53.56px;width:0.5px;height:8.93px;background:#F0F0F0;"></div>
<div style="left:768px;top:53.73px;width:65.55px;overflow:hidden;line-height:10px;font-size:6.440px;color:#1e1e1e;font-family:'Liberation Sans', sans-serif;white-space:nowrap;transform:scaleX(0.8696);transform-origin:0 50%">Externe Implementierur</div>
<div style="left:827.5px;top:53.73px;width:79.35px;overflow:hidden;line-height:10px;font-size:6.440px;color:#1e1e1e;font-family:'Liberation Sans', sans-serif;white-space:nowrap;transform:scaleX(0.8696);transform-origin:0 50%">False</div>
<div style="left:767px;top:70.92px;width:130.2px;height:0.5px;background:#F0F0F0;"></div>
<div style="left:826px;top:62.49px;width:0.5px;height:8.93px;background:#F0F0F0;"></div>
<div style="left:768px;top:62.66px;width:65.55px;overflow:hidden;line-height:10px;font-size:6.440px;color:#1e1e1e;font-family:'Liberation Sans', sans-serif;white-space:nowrap;transform:scaleX(0.8696);transform-origin:0 50%">Immer binden</div>
<div style="left:827.5px;top:62.66px;width:79.35px;overflow:hidden;line-height:10px;font-size:6.440px;color:#1e1e1e;font-family:'Liberation Sans', sans-serif;white-space:nowrap;transform:scaleX(0.8696);transform-origin:0 50%">False</div>
<div style="left:767px;top:79.85px;width:130.2px;height:0.5px;background:#F0F0F0;"></div>
<div style="left:826px;top:71.42px;width:0.5px;height:8.93px;background:#F0F0F0;"></div>
<div style="left:768px;top:71.59px;width:65.55px;overflow:hidden;line-height:10px;font-size:6.440px;color:#1e1e1e;font-family:'Liberation Sans', sans-serif;white-space:nowrap;transform:scaleX(0.8696);transform-origin:0 50%">Vom Übersetzen aussch</div>
<div style="left:827.5px;top:71.59px;width:79.35px;overflow:hidden;line-height:10px;font-size:6.440px;color:#1e1e1e;font-family:'Liberation Sans', sans-serif;white-space:nowrap;transform:scaleX(0.8696);transform-origin:0 50%">False</div>
<div style="left:758.5px;top:80.35px;width:138.7px;height:8.93px;background:#F0F0F0;"></div>
<svg style="position:absolute;left:759.8px;top:82.215px" width="6" height="6" viewBox="0 0 6 6"><rect x="0.5" y="0.5" width="4.2" height="4.2" fill="#f8f8f8" stroke="#444" stroke-width="0.55"/><path d="M1.4 2.6h2.4" stroke="#222" stroke-width="0.6"/></svg>
<div style="left:768px;top:80.52px;line-height:10px;font-size:6.440px;color:#111;font-weight:700;font-family:'Liberation Sans', sans-serif;white-space:nowrap;transform:scaleX(0.8696);transform-origin:0 50%;">Image</div>
<div style="left:767px;top:97.71000000000001px;width:130.2px;height:0.5px;background:#F0F0F0;"></div>
<div style="left:826px;top:89.28px;width:0.5px;height:8.93px;background:#F0F0F0;"></div>
<div style="left:768px;top:89.45px;width:65.55px;overflow:hidden;line-height:10px;font-size:6.440px;color:#1e1e1e;font-family:'Liberation Sans', sans-serif;white-space:nowrap;transform:scaleX(0.8696);transform-origin:0 50%">Image</div>
<div style="left:826.6px;top:89.88px;width:9.3px;height:7.8px;background:#fff;box-shadow:inset 0 0 0 0.65px #3a3a3a"></div>
<div style="left:839.6px;top:89.45px;line-height:10px;font-size:6.440px;color:#111;font-weight:700;font-family:'Liberation Sans', sans-serif;white-space:nowrap;transform:scaleX(0.8696);transform-origin:0 50%;">(Keine)</div>
<div style="left:767px;top:106.64000000000001px;width:130.2px;height:0.5px;background:#F0F0F0;"></div>
<div style="left:826px;top:98.21000000000001px;width:0.5px;height:8.93px;background:#F0F0F0;"></div>
<div style="left:768px;top:98.38px;width:65.55px;overflow:hidden;line-height:10px;font-size:6.440px;color:#8a8a8a;font-family:'Liberation Sans', sans-serif;white-space:nowrap;transform:scaleX(0.8696);transform-origin:0 50%">Transparenz</div>
<div style="left:827.5px;top:98.38px;width:79.35px;overflow:hidden;line-height:10px;font-size:6.440px;color:#8a8a8a;font-family:'Liberation Sans', sans-serif;white-space:nowrap;transform:scaleX(0.8696);transform-origin:0 50%">False</div>
<div style="left:767px;top:115.57px;width:130.2px;height:0.5px;background:#F0F0F0;"></div>
<div style="left:826px;top:107.14px;width:0.5px;height:8.93px;background:#F0F0F0;"></div>
<div style="left:768px;top:107.31px;width:65.55px;overflow:hidden;line-height:10px;font-size:6.440px;color:#8a8a8a;font-family:'Liberation Sans', sans-serif;white-space:nowrap;transform:scaleX(0.8696);transform-origin:0 50%">Transparenzfarbe</div>
<div style="left:826.6px;top:107.74px;width:9.3px;height:7.8px;background:#fff;box-shadow:inset 0 0 0 0.65px #3a3a3a"></div>
<div style="left:758.5px;top:116.07000000000001px;width:138.7px;height:8.93px;background:#F0F0F0;"></div>
<svg style="position:absolute;left:759.8px;top:117.93500000000002px" width="6" height="6" viewBox="0 0 6 6"><rect x="0.5" y="0.5" width="4.2" height="4.2" fill="#f8f8f8" stroke="#444" stroke-width="0.55"/><path d="M1.4 2.6h2.4" stroke="#222" stroke-width="0.6"/></svg>
<div style="left:768px;top:116.24px;line-height:10px;font-size:6.440px;color:#111;font-weight:700;font-family:'Liberation Sans', sans-serif;white-space:nowrap;transform:scaleX(0.8696);transform-origin:0 50%;">Lizenzen</div>
<div style="left:767px;top:133.43px;width:130.2px;height:0.5px;background:#F0F0F0;"></div>
<div style="left:826px;top:125.0px;width:0.5px;height:8.93px;background:#F0F0F0;"></div>
<div style="left:768px;top:125.17px;width:65.55px;overflow:hidden;line-height:10px;font-size:6.440px;color:#1e1e1e;font-family:'Liberation Sans', sans-serif;white-space:nowrap;transform:scaleX(0.8696);transform-origin:0 50%">Lizenzen</div>
<div style="left:827.5px;top:125.17px;width:79.35px;overflow:hidden;line-height:10px;font-size:6.440px;color:#1e1e1e;font-family:'Liberation Sans', sans-serif;white-space:nowrap;transform:scaleX(0.8696);transform-origin:0 50%">(Sammlung)</div>
<div style="left:758.5px;top:133.93px;width:138.7px;height:8.93px;background:#F0F0F0;"></div>
<svg style="position:absolute;left:759.8px;top:135.79500000000002px" width="6" height="6" viewBox="0 0 6 6"><rect x="0.5" y="0.5" width="4.2" height="4.2" fill="#f8f8f8" stroke="#444" stroke-width="0.55"/><path d="M1.4 2.6h2.4" stroke="#222" stroke-width="0.6"/></svg>
<div style="left:768px;top:134.09px;line-height:10px;font-size:6.440px;color:#111;font-weight:700;font-family:'Liberation Sans', sans-serif;white-space:nowrap;transform:scaleX(0.8696);transform-origin:0 50%;">Misc</div>
<div style="left:767px;top:151.29000000000002px;width:130.2px;height:0.5px;background:#F0F0F0;"></div>
<div style="left:826px;top:142.86px;width:0.5px;height:8.93px;background:#F0F0F0;"></div>
<div style="left:768px;top:143.03px;width:65.55px;overflow:hidden;line-height:10px;font-size:6.440px;color:#1e1e1e;font-family:'Liberation Sans', sans-serif;white-space:nowrap;transform:scaleX(0.8696);transform-origin:0 50%">FileName</div>
<div style="left:827.5px;top:143.03px;line-height:10px;font-size:6.440px;color:#111;font-weight:700;font-family:'Liberation Sans', sans-serif;white-space:nowrap;transform:scaleX(0.8696);transform-origin:0 50%;">OperatingHours</div>
<div style="left:767px;top:160.22000000000003px;width:130.2px;height:0.5px;background:#F0F0F0;"></div>
<div style="left:826px;top:151.79000000000002px;width:0.5px;height:8.93px;background:#F0F0F0;"></div>
<div style="left:768px;top:151.96px;width:65.55px;overflow:hidden;line-height:10px;font-size:6.440px;color:#8a8a8a;font-family:'Liberation Sans', sans-serif;white-space:nowrap;transform:scaleX(0.8696);transform-origin:0 50%">FullPath</div>
<div style="left:827.5px;top:151.96px;width:79.35px;overflow:hidden;line-height:10px;font-size:6.440px;color:#8a8a8a;font-family:'Liberation Sans', sans-serif;white-space:nowrap;transform:scaleX(0.8696);transform-origin:0 50%">C:\Users\vm\Desktop\.TEMP</div>
<div style="left:767px;top:169.15px;width:130.2px;height:0.5px;background:#F0F0F0;"></div>
<div style="left:826px;top:160.72px;width:0.5px;height:8.93px;background:#F0F0F0;"></div>
<div style="left:768px;top:160.88px;width:65.55px;overflow:hidden;line-height:10px;font-size:6.440px;color:#8a8a8a;font-family:'Liberation Sans', sans-serif;white-space:nowrap;transform:scaleX(0.8696);transform-origin:0 50%">Version</div>
<div style="left:827.5px;top:160.88px;width:79.35px;overflow:hidden;line-height:10px;font-size:6.440px;color:#8a8a8a;font-family:'Liberation Sans', sans-serif;white-space:nowrap;transform:scaleX(0.8696);transform-origin:0 50%">1.1.0.1</div>
<div style="left:758.5px;top:169.64999999999998px;width:138.7px;height:8.93px;background:#F0F0F0;"></div>
<svg style="position:absolute;left:759.8px;top:171.515px" width="6" height="6" viewBox="0 0 6 6"><rect x="0.5" y="0.5" width="4.2" height="4.2" fill="#f8f8f8" stroke="#444" stroke-width="0.55"/><path d="M1.4 2.6h2.4" stroke="#222" stroke-width="0.6"/></svg>
<div style="left:768px;top:169.81px;line-height:10px;font-size:6.440px;color:#111;font-weight:700;font-family:'Liberation Sans', sans-serif;white-space:nowrap;transform:scaleX(0.8696);transform-origin:0 50%;">Options</div>
<div style="left:767px;top:187.01px;width:130.2px;height:0.5px;background:#F0F0F0;"></div>
<div style="left:826px;top:178.57999999999998px;width:0.5px;height:8.93px;background:#F0F0F0;"></div>
<div style="left:768px;top:178.74px;width:65.55px;overflow:hidden;line-height:10px;font-size:6.440px;color:#8a8a8a;font-family:'Liberation Sans', sans-serif;white-space:nowrap;transform:scaleX(0.8696);transform-origin:0 50%">Format</div>
<div style="left:827.5px;top:178.74px;width:79.35px;overflow:hidden;line-height:10px;font-size:6.440px;color:#8a8a8a;font-family:'Liberation Sans', sans-serif;white-space:nowrap;transform:scaleX(0.8696);transform-origin:0 50%">xml</div>
<div style="left:767px;top:195.94px;width:130.2px;height:0.5px;background:#F0F0F0;"></div>
<div style="left:826px;top:187.51px;width:0.5px;height:8.93px;background:#F0F0F0;"></div>
<div style="left:768px;top:187.67px;width:65.55px;overflow:hidden;line-height:10px;font-size:6.440px;color:#7a7a7a;font-family:'Liberation Sans', sans-serif;white-space:nowrap;transform:scaleX(0.8696);transform-origin:0 50%">Produktversion</div>
<div style="left:827.5px;top:187.67px;width:79.35px;overflow:hidden;line-height:10px;font-size:6.440px;color:#6a6a6a;font-family:'Liberation Sans', sans-serif;white-space:nowrap;transform:scaleX(0.8696);transform-origin:0 50%">True</div>
<div style="left:767px;top:204.87px;width:130.2px;height:0.5px;background:#F0F0F0;"></div>
<div style="left:826px;top:196.44px;width:0.5px;height:8.93px;background:#F0F0F0;"></div>
<div style="left:768px;top:196.60px;width:65.55px;overflow:hidden;line-height:10px;font-size:6.440px;color:#7a7a7a;font-family:'Liberation Sans', sans-serif;white-space:nowrap;transform:scaleX(0.8696);transform-origin:0 50%">Seperate Line Ids</div>
<div style="left:827.5px;top:196.60px;width:79.35px;overflow:hidden;line-height:10px;font-size:6.440px;color:#6a6a6a;font-family:'Liberation Sans', sans-serif;white-space:nowrap;transform:scaleX(0.8696);transform-origin:0 50%">False</div>
<div style="left:767px;top:213.8px;width:130.2px;height:0.5px;background:#F0F0F0;"></div>
<div style="left:826px;top:205.37px;width:0.5px;height:8.93px;background:#F0F0F0;"></div>
<div style="left:768px;top:205.53px;width:65.55px;overflow:hidden;line-height:10px;font-size:6.440px;color:#7a7a7a;font-family:'Liberation Sans', sans-serif;white-space:nowrap;transform:scaleX(0.8696);transform-origin:0 50%">Sortieren</div>
<div style="left:827.5px;top:205.53px;width:79.35px;overflow:hidden;line-height:10px;font-size:6.440px;color:#6a6a6a;font-family:'Liberation Sans', sans-serif;white-space:nowrap;transform:scaleX(0.8696);transform-origin:0 50%">Name</div>
<div style="left:758.5px;top:397px;width:138.7px;height:0.6px;background:#F0F0F0;"></div>
<div style="left:761.5px;top:400.10px;line-height:10px;font-size:6.382px;color:#111;font-weight:700;font-family:'Liberation Sans', sans-serif;white-space:nowrap;transform:scaleX(0.8696);transform-origin:0 50%;">Compilerdefinitionen</div>
<div style="left:761.5px;top:408.90px;line-height:10px;font-size:6.440px;color:#1e1e1e;font-weight:400;font-family:'Liberation Sans', sans-serif;white-space:nowrap;transform:scaleX(0.8696);transform-origin:0 50%;">Definitionen und Bedingungen für die Übersetzung</div>
<div style="left:761.5px;top:415.60px;line-height:10px;font-size:6.440px;color:#1e1e1e;font-weight:400;font-family:'Liberation Sans', sans-serif;white-space:nowrap;transform:scaleX(0.8696);transform-origin:0 50%;">dieses Objekts.</div>
<div style="left:758.5px;top:427px;width:139px;height:10px;background:#293955;"></div>
<div style="left:758.5px;top:426.6px;width:39.8px;height:10px;background:#FFFFFF;"></div>
<div style="left:761px;top:427.30px;line-height:10px;font-size:6.325px;color:#000;font-weight:400;font-family:'Liberation Sans', sans-serif;white-space:nowrap;transform:scaleX(0.8696);transform-origin:0 50%;">Eigenschaften</div>
<div style="left:798.3px;top:426.6px;width:26.3px;height:10px;background:#4D6082;"></div>
<div style="left:800.5px;top:427.30px;line-height:10px;font-size:6.325px;color:#fff;font-weight:400;font-family:'Liberation Sans', sans-serif;white-space:nowrap;transform:scaleX(0.8696);transform-origin:0 50%;">Toolbox</div>
<div style="left:0px;top:439.4px;width:900px;height:10.4px;background:#007ACC;"></div>
<div style="left:0px;top:449.8px;width:900px;height:1.2px;background:#0E5C9A;"></div>
<svg style="position:absolute;left:0px;top:441.5px" width="10" height="8" viewBox="0 0 10 8"><path d="M1.3 1.6h6.4l-0.9 5h-6.4z" fill="none" stroke="#f0f6ff" stroke-width="0.7"/></svg>
<div style="left:11.7px;top:440.30px;line-height:10px;font-size:6.440px;color:#fff;font-weight:400;font-family:'Liberation Sans', sans-serif;white-space:nowrap;transform:scaleX(0.8696);transform-origin:0 50%;">Bereit</div>
<div style="left:542.5px;top:440.30px;line-height:10px;font-size:6.095px;color:#fff;font-weight:400;font-family:'Liberation Sans', sans-serif;white-space:nowrap;transform:scaleX(0.8696);transform-origin:0 50%;">Z 1</div>
<div style="left:586px;top:440.30px;line-height:10px;font-size:6.095px;color:#fff;font-weight:400;font-family:'Liberation Sans', sans-serif;white-space:nowrap;transform:scaleX(0.8696);transform-origin:0 50%;">S 1</div>
<div style="left:629px;top:440.30px;line-height:10px;font-size:6.095px;color:#fff;font-weight:400;font-family:'Liberation Sans', sans-serif;white-space:nowrap;transform:scaleX(0.8696);transform-origin:0 50%;">Zei 1</div>
<div style="left:693px;top:440.30px;line-height:10px;font-size:5.750px;color:#fff;font-weight:400;font-family:'Liberation Sans', sans-serif;white-space:nowrap;transform:scaleX(0.8696);transform-origin:0 50%;">EINFG</div>
<svg style="position:absolute;left:783px;top:441px" width="8" height="8" viewBox="0 0 8 8"><path d="M4 1.2l2.2 2.5h-1.4v3h-1.6v-3h-1.4z" fill="#fff"/></svg>
<div style="left:794.3px;top:440.30px;line-height:10px;font-size:6.440px;color:#fff;font-weight:400;font-family:'Liberation Sans', sans-serif;white-space:nowrap;transform:scaleX(0.8696);transform-origin:0 50%;">Zur Quellcodeverwaltung hinzufügen</div>
<svg style="position:absolute;left:889px;top:442px" width="7" height="5" viewBox="0 0 7 5"><path d="M1.5 3.5l2-2l2 2z" fill="#fff"/></svg>
</body></html>
